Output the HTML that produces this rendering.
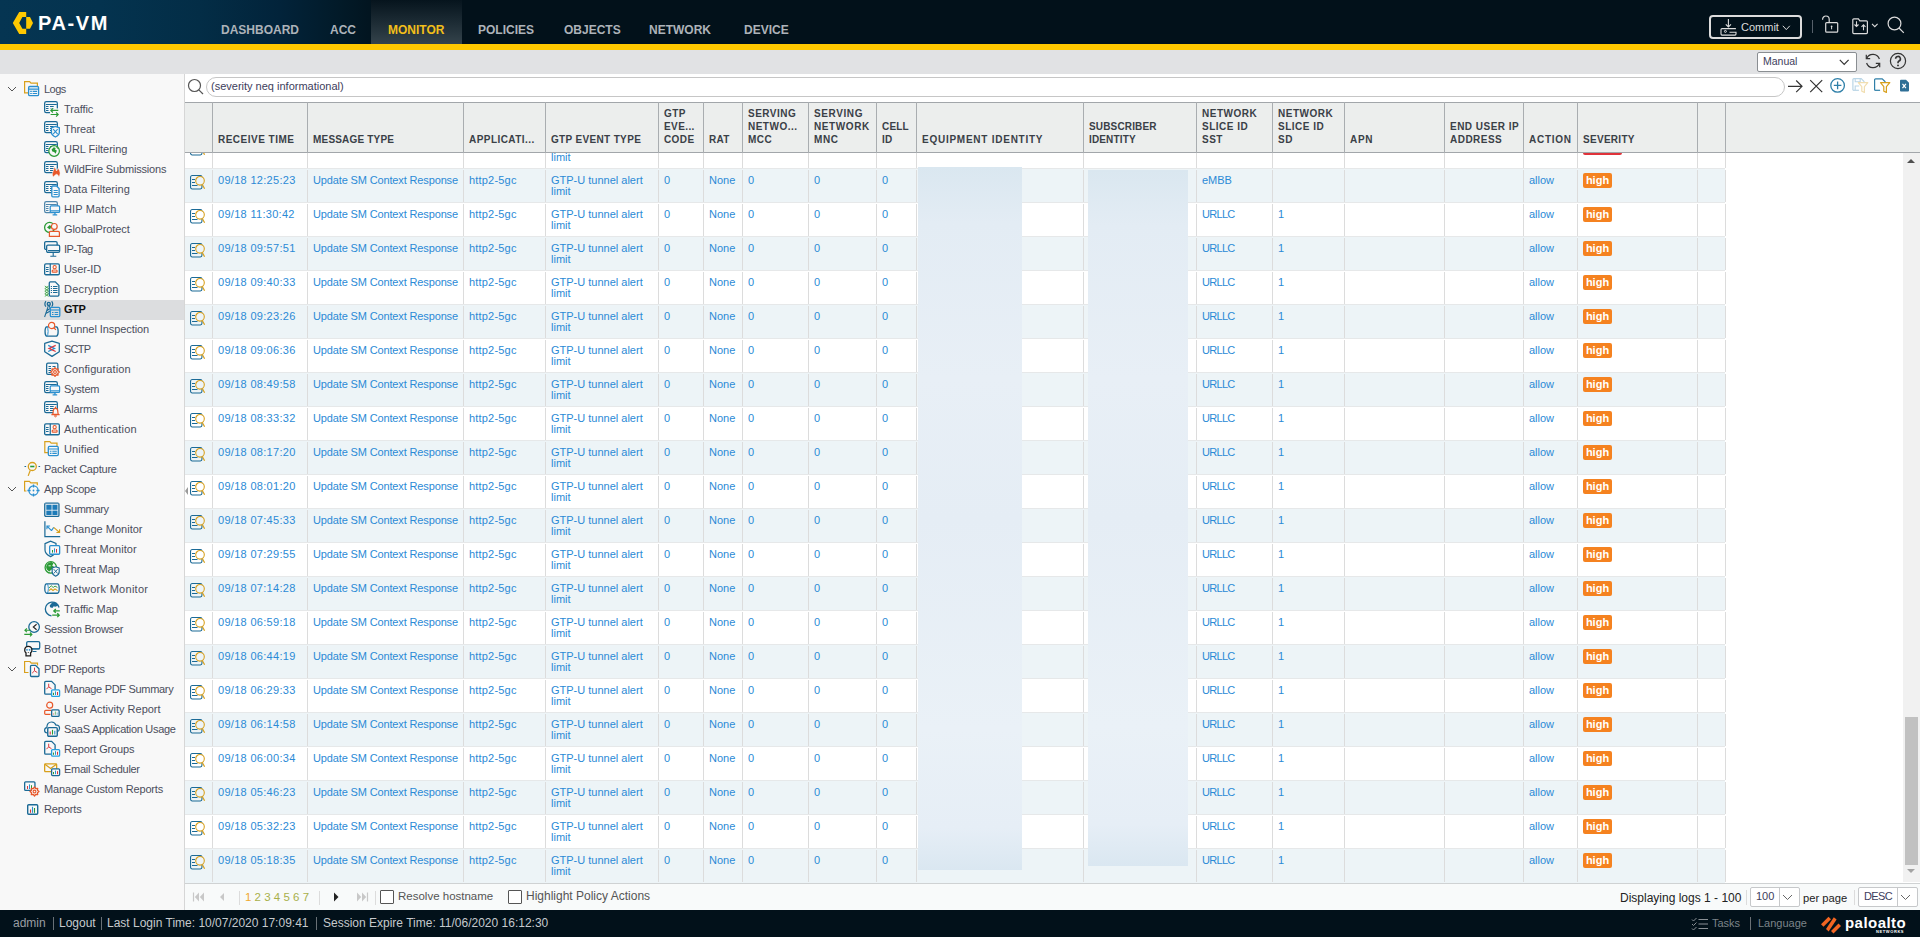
<!DOCTYPE html><html><head><meta charset="utf-8"><title>GTP Logs</title><style>
*{margin:0;padding:0;box-sizing:border-box}
html,body{width:1920px;height:937px;overflow:hidden;background:#fff;font-family:"Liberation Sans",sans-serif}
.a{position:absolute;white-space:nowrap}
svg.a{overflow:visible}
#hdr{left:0;top:0;width:1920px;height:44px;background:linear-gradient(90deg,#053552 0px,#04334f 100px,#032d46 200px,#02233a 280px,#021a28 340px,#02131d 380px,#02111a 460px,#02111a 1920px)}
#tab{left:371px;top:0;width:91px;height:44px;background:linear-gradient(180deg,#06141d 0%,#1c2b34 50%,#34434b 100%)}
#ybar{left:0;top:44px;width:1920px;height:6px;background:#ffc800}
#tbar{left:0;top:50px;width:1920px;height:24px;background:#e1e2e4}
#side{left:0;top:74px;width:185px;height:836px;background:#f8f8f8;border-right:1px solid #d6d6d6}
#main{left:185px;top:74px;width:1735px;height:836px;background:#fff}
#foot{left:0;top:910px;width:1920px;height:27px;background:#02111a}
.nav{top:24px;font-size:12px;font-weight:bold;color:#adb3b9;line-height:12px}
.hd{font-size:10px;font-weight:bold;color:#3a4047;line-height:13px}
.c{font-size:11px;color:#2b8ad6;line-height:11px}
.si{font-size:11px;color:#4b4e5c;line-height:12px;letter-spacing:-0.15px}
.badge{width:29px;height:15px;background:#f58220;border-radius:2px;color:#fff;font-size:11px;font-weight:bold;line-height:15px;text-align:center}
.ft{top:917px;font-size:12px;line-height:13px;color:#c6cacd}
.pg{font-size:12px;line-height:13px;color:#222}
</style></head><body>
<div id="hdr" class="a"></div><div id="tab" class="a"></div>
<div id="ybar" class="a"></div><div id="tbar" class="a"></div>
<div id="side" class="a"></div><div id="main" class="a"></div><div id="foot" class="a"></div>
<svg class="a" style="left:0;top:0" width="40" height="44"><polygon fill="#ffc800" points="19.2,12 26.2,12 26.2,17 22.4,17 19.2,23 22.4,28.8 26.2,28.8 26.2,34 19.2,34 12.8,23"/><polygon fill="#ffc800" points="26.2,17 30,17 33,23 30,28.8 26.2,28.8"/></svg>
<div class="a" style="left:38px;top:14px;font-size:20px;font-weight:bold;color:#fff;letter-spacing:1.6px;line-height:18px">PA-VM</div>
<div class="a nav" style="left:221px;color:#adb3b9">DASHBOARD</div>
<div class="a nav" style="left:330px;color:#adb3b9">ACC</div>
<div class="a nav" style="left:388px;color:#f2bf1a">MONITOR</div>
<div class="a nav" style="left:478px;color:#adb3b9">POLICIES</div>
<div class="a nav" style="left:564px;color:#adb3b9">OBJECTS</div>
<div class="a nav" style="left:649px;color:#adb3b9">NETWORK</div>
<div class="a nav" style="left:744px;color:#adb3b9">DEVICE</div>
<div class="a" style="left:1709px;top:15px;width:93px;height:24px;border:2px solid #dcdcdc;border-radius:4px"></div>
<svg class="a" style="left:1720px;top:18px" width="18" height="18"><path d="M8.4 1v7.8M5.8 6.3l2.6 2.6 2.6-2.6" fill="none" stroke="#dcdcdc" stroke-width="1.1"/><path d="M15.9 10.6H2a1 1 0 0 0-1 1v4.5a1 1 0 0 0 1 1h13a1 1 0 0 0 1-1v-1.8H9.5" fill="none" stroke="#dcdcdc" stroke-width="1.1"/><circle cx="5.4" cy="13.4" r="1" fill="none" stroke="#dcdcdc" stroke-width="1"/></svg>
<div class="a" style="left:1741px;top:21px;font-size:11px;line-height:12px;color:#dcdcdc">Commit</div>
<svg class="a" style="left:1782px;top:25px" width="9" height="6"><polyline points="0.8,0.8 4.3,4.6 7.8,0.8" fill="none" stroke="#dcdcdc" stroke-width="1"/></svg>
<div class="a" style="left:1812px;top:20px;width:1px;height:13px;background:#56606a"></div>
<svg class="a" style="left:1820px;top:15px" width="20" height="20"><path d="M2.6 4.7V4.3a3.3 3.3 0 0 1 6.6 0v3.3" fill="none" stroke="#dcdcdc" stroke-width="1.2"/><rect x="5.7" y="7.6" width="12" height="9.6" rx="1" fill="none" stroke="#dcdcdc" stroke-width="1.2"/><circle cx="11.6" cy="11.3" r="0.9" fill="#dcdcdc"/><path d="M11.6 11.5v2.8" stroke="#dcdcdc" stroke-width="1"/></svg>
<svg class="a" style="left:1851px;top:17px" width="30" height="18"><path d="M1.8 15.6V2.8a1 1 0 0 1 1-1h4.6l1.5 2h6.5a1 1 0 0 1 1 1v10.8a1 1 0 0 1-1 1H2.8a1 1 0 0 1-1-1z" fill="none" stroke="#dcdcdc" stroke-width="1.2"/><path d="M5.5 4.2v5.3M3.5 7.5l2 2 2-2M12.5 13.2V7.8M10.5 9.8l2-2 2 2" fill="none" stroke="#dcdcdc" stroke-width="1.1"/><polyline points="21,6.8 23.8,9.6 26.6,6.8" fill="none" stroke="#dcdcdc" stroke-width="1.1"/></svg>
<svg class="a" style="left:1886px;top:15px" width="20" height="20"><circle cx="8.5" cy="8.5" r="6.4" fill="none" stroke="#dcdcdc" stroke-width="1.2"/><path d="M13 13l4.8 4.8" stroke="#dcdcdc" stroke-width="1.2"/></svg>
<div class="a" style="left:1757px;top:52px;width:100px;height:20px;border:1px solid #8a8e92;border-radius:2px;background:#fff"></div>
<div class="a" style="left:1763px;top:56px;font-size:10.5px;line-height:11px;color:#3d3d5c">Manual</div>
<svg class="a" style="left:1839px;top:59px" width="11" height="7"><polyline points="0.8,0.8 5.2,5.4 9.6,0.8" fill="none" stroke="#333" stroke-width="1.2"/></svg>
<svg class="a" style="left:1864px;top:52px" width="18" height="18"><path d="M2.7 6.4A6.8 6.8 0 0 1 15.4 7" fill="none" stroke="#333" stroke-width="1.2"/><path d="M2.3 2.8v3.9h3.9" fill="none" stroke="#333" stroke-width="1.2"/><path d="M15.3 11.6A6.8 6.8 0 0 1 2.6 11" fill="none" stroke="#333" stroke-width="1.2"/><path d="M15.7 15.2v-3.9h-3.9" fill="none" stroke="#333" stroke-width="1.2"/></svg>
<svg class="a" style="left:1889px;top:52px" width="18" height="18"><circle cx="9" cy="9" r="7.6" fill="none" stroke="#333" stroke-width="1.2"/><path d="M6.6 6.8a2.4 2.4 0 1 1 3.4 2.2c-0.7 0.4-1 0.9-1 1.7v0.6" fill="none" stroke="#333" stroke-width="1.6"/><circle cx="9" cy="13.4" r="0.95" fill="#333"/></svg>
<svg class="a" style="left:187px;top:78px" width="18" height="18"><circle cx="7.5" cy="7.5" r="6" fill="none" stroke="#555" stroke-width="1.2"/><line x1="11.8" y1="11.8" x2="16" y2="16" stroke="#555" stroke-width="1.2"/></svg>
<div class="a" style="left:206px;top:77px;width:1579px;height:20px;border:1px solid #c6c6c6;border-radius:10px;background:#fff"></div>
<div class="a" style="left:211px;top:80px;font-size:11px;line-height:12px;color:#3d3d5c">(severity neq informational)</div>
<svg class="a" style="left:1787px;top:79px" width="17" height="15"><path d="M1 7.3h14.2M9.2 1.5l5.8 5.8-5.8 5.8" fill="none" stroke="#333" stroke-width="1.2"/></svg>
<svg class="a" style="left:1809px;top:79px" width="15" height="15"><path d="M1.2 1.2l12 12M13.2 1.2l-12 12" fill="none" stroke="#333" stroke-width="1.2"/></svg>
<svg class="a" style="left:1829px;top:77px" width="17" height="17"><circle cx="8.6" cy="8.4" r="6.8" fill="none" stroke="#2e7fa8" stroke-width="1.3"/><path d="M8.6 4.6v7.6M4.8 8.4h7.6" stroke="#2e7fa8" stroke-width="1.3"/></svg>
<svg class="a" style="left:1851px;top:77px" width="18" height="18"><path d="M1.9 13.3V2.6a1 1 0 0 1 1-1h7.3l2.8 2.8v3" fill="none" stroke="#b9d5e6" stroke-width="1.2"/><path d="M1.9 13.3h6" stroke="#b9d5e6" stroke-width="1.2"/><path d="M4.2 1.8v3h5v-3M4.2 13v-4h4" fill="none" stroke="#b9d5e6" stroke-width="1.1"/><path d="M7.3 5.6h9.5l-3.4 4v5.8l-2.6-1.2V9.6z" fill="#fff" stroke="#f1deb0" stroke-width="1.2" stroke-linejoin="round"/></svg>
<svg class="a" style="left:1873px;top:77px" width="18" height="18"><path d="M1.6 13.3V2.8a1 1 0 0 1 1-1h6.6l2.8 2.8v1.5" fill="none" stroke="#2e7fa8" stroke-width="1.2"/><path d="M1.6 13.3h5.5" stroke="#2e7fa8" stroke-width="1.2"/><path d="M7.5 5.6h9.3l-3.4 4v5.8l-2.6-1.2V9.6z" fill="#fff" stroke="#d8a01c" stroke-width="1.2" stroke-linejoin="round"/></svg>
<svg class="a" style="left:1899px;top:79px" width="12" height="14"><path d="M1 1.8a1 1 0 0 1 1-1h5l3 3v7.8a1 1 0 0 1-1 1H2a1 1 0 0 1-1-1z" fill="#2e6f96"/><path d="M3.5 4.8l3.4 4.4M6.9 4.8l-3.4 4.4" stroke="#fff" stroke-width="1.2"/></svg>
<div class="a" style="left:185px;top:102px;width:1735px;height:51px;background:#eceeed;border-top:1px solid #a2a6aa;border-bottom:1px solid #a2a6aa"></div>
<div class="a" style="left:185px;top:153px;width:1540px;height:15px;background:#fff;"></div>
<div class="a" style="left:185px;top:168px;width:1540px;height:34px;background:#edf4f7;border-top:1px solid #e6e8e9;"></div>
<div class="a" style="left:185px;top:202px;width:1540px;height:34px;background:#fff;border-top:1px solid #e6e8e9;"></div>
<div class="a" style="left:185px;top:236px;width:1540px;height:34px;background:#edf4f7;border-top:1px solid #e6e8e9;"></div>
<div class="a" style="left:185px;top:270px;width:1540px;height:34px;background:#fff;border-top:1px solid #e6e8e9;"></div>
<div class="a" style="left:185px;top:304px;width:1540px;height:34px;background:#edf4f7;border-top:1px solid #e6e8e9;"></div>
<div class="a" style="left:185px;top:338px;width:1540px;height:34px;background:#fff;border-top:1px solid #e6e8e9;"></div>
<div class="a" style="left:185px;top:372px;width:1540px;height:34px;background:#edf4f7;border-top:1px solid #e6e8e9;"></div>
<div class="a" style="left:185px;top:406px;width:1540px;height:34px;background:#fff;border-top:1px solid #e6e8e9;"></div>
<div class="a" style="left:185px;top:440px;width:1540px;height:34px;background:#edf4f7;border-top:1px solid #e6e8e9;"></div>
<div class="a" style="left:185px;top:474px;width:1540px;height:34px;background:#fff;border-top:1px solid #e6e8e9;"></div>
<div class="a" style="left:185px;top:508px;width:1540px;height:34px;background:#edf4f7;border-top:1px solid #e6e8e9;"></div>
<div class="a" style="left:185px;top:542px;width:1540px;height:34px;background:#fff;border-top:1px solid #e6e8e9;"></div>
<div class="a" style="left:185px;top:576px;width:1540px;height:34px;background:#edf4f7;border-top:1px solid #e6e8e9;"></div>
<div class="a" style="left:185px;top:610px;width:1540px;height:34px;background:#fff;border-top:1px solid #e6e8e9;"></div>
<div class="a" style="left:185px;top:644px;width:1540px;height:34px;background:#edf4f7;border-top:1px solid #e6e8e9;"></div>
<div class="a" style="left:185px;top:678px;width:1540px;height:34px;background:#fff;border-top:1px solid #e6e8e9;"></div>
<div class="a" style="left:185px;top:712px;width:1540px;height:34px;background:#edf4f7;border-top:1px solid #e6e8e9;"></div>
<div class="a" style="left:185px;top:746px;width:1540px;height:34px;background:#fff;border-top:1px solid #e6e8e9;"></div>
<div class="a" style="left:185px;top:780px;width:1540px;height:34px;background:#edf4f7;border-top:1px solid #e6e8e9;"></div>
<div class="a" style="left:185px;top:814px;width:1540px;height:34px;background:#fff;border-top:1px solid #e6e8e9;"></div>
<div class="a" style="left:185px;top:848px;width:1540px;height:35px;background:#edf4f7;border-top:1px solid #e6e8e9;"></div>
<div class="a" style="left:212px;top:102px;width:1px;height:51px;background:#a9adb0"></div>
<div class="a" style="left:212px;top:153px;width:1px;height:15px;background:#dcdcdc"></div>
<div class="a" style="left:212px;top:168px;width:1px;height:715px;background:repeating-linear-gradient(180deg,transparent 0 2px,#dcdcdc 2px 34px)"></div>
<div class="a" style="left:307px;top:102px;width:1px;height:51px;background:#a9adb0"></div>
<div class="a" style="left:307px;top:153px;width:1px;height:15px;background:#dcdcdc"></div>
<div class="a" style="left:307px;top:168px;width:1px;height:715px;background:repeating-linear-gradient(180deg,transparent 0 2px,#dcdcdc 2px 34px)"></div>
<div class="a" style="left:463px;top:102px;width:1px;height:51px;background:#a9adb0"></div>
<div class="a" style="left:463px;top:153px;width:1px;height:15px;background:#dcdcdc"></div>
<div class="a" style="left:463px;top:168px;width:1px;height:715px;background:repeating-linear-gradient(180deg,transparent 0 2px,#dcdcdc 2px 34px)"></div>
<div class="a" style="left:545px;top:102px;width:1px;height:51px;background:#a9adb0"></div>
<div class="a" style="left:545px;top:153px;width:1px;height:15px;background:#dcdcdc"></div>
<div class="a" style="left:545px;top:168px;width:1px;height:715px;background:repeating-linear-gradient(180deg,transparent 0 2px,#dcdcdc 2px 34px)"></div>
<div class="a" style="left:658px;top:102px;width:1px;height:51px;background:#a9adb0"></div>
<div class="a" style="left:658px;top:153px;width:1px;height:15px;background:#dcdcdc"></div>
<div class="a" style="left:658px;top:168px;width:1px;height:715px;background:repeating-linear-gradient(180deg,transparent 0 2px,#dcdcdc 2px 34px)"></div>
<div class="a" style="left:703px;top:102px;width:1px;height:51px;background:#a9adb0"></div>
<div class="a" style="left:703px;top:153px;width:1px;height:15px;background:#dcdcdc"></div>
<div class="a" style="left:703px;top:168px;width:1px;height:715px;background:repeating-linear-gradient(180deg,transparent 0 2px,#dcdcdc 2px 34px)"></div>
<div class="a" style="left:742px;top:102px;width:1px;height:51px;background:#a9adb0"></div>
<div class="a" style="left:742px;top:153px;width:1px;height:15px;background:#dcdcdc"></div>
<div class="a" style="left:742px;top:168px;width:1px;height:715px;background:repeating-linear-gradient(180deg,transparent 0 2px,#dcdcdc 2px 34px)"></div>
<div class="a" style="left:808px;top:102px;width:1px;height:51px;background:#a9adb0"></div>
<div class="a" style="left:808px;top:153px;width:1px;height:15px;background:#dcdcdc"></div>
<div class="a" style="left:808px;top:168px;width:1px;height:715px;background:repeating-linear-gradient(180deg,transparent 0 2px,#dcdcdc 2px 34px)"></div>
<div class="a" style="left:876px;top:102px;width:1px;height:51px;background:#a9adb0"></div>
<div class="a" style="left:876px;top:153px;width:1px;height:15px;background:#dcdcdc"></div>
<div class="a" style="left:876px;top:168px;width:1px;height:715px;background:repeating-linear-gradient(180deg,transparent 0 2px,#dcdcdc 2px 34px)"></div>
<div class="a" style="left:916px;top:102px;width:1px;height:51px;background:#a9adb0"></div>
<div class="a" style="left:916px;top:153px;width:1px;height:15px;background:#dcdcdc"></div>
<div class="a" style="left:916px;top:168px;width:1px;height:715px;background:repeating-linear-gradient(180deg,transparent 0 2px,#dcdcdc 2px 34px)"></div>
<div class="a" style="left:1083px;top:102px;width:1px;height:51px;background:#a9adb0"></div>
<div class="a" style="left:1083px;top:153px;width:1px;height:15px;background:#dcdcdc"></div>
<div class="a" style="left:1083px;top:168px;width:1px;height:715px;background:repeating-linear-gradient(180deg,transparent 0 2px,#dcdcdc 2px 34px)"></div>
<div class="a" style="left:1196px;top:102px;width:1px;height:51px;background:#a9adb0"></div>
<div class="a" style="left:1196px;top:153px;width:1px;height:15px;background:#dcdcdc"></div>
<div class="a" style="left:1196px;top:168px;width:1px;height:715px;background:repeating-linear-gradient(180deg,transparent 0 2px,#dcdcdc 2px 34px)"></div>
<div class="a" style="left:1272px;top:102px;width:1px;height:51px;background:#a9adb0"></div>
<div class="a" style="left:1272px;top:153px;width:1px;height:15px;background:#dcdcdc"></div>
<div class="a" style="left:1272px;top:168px;width:1px;height:715px;background:repeating-linear-gradient(180deg,transparent 0 2px,#dcdcdc 2px 34px)"></div>
<div class="a" style="left:1344px;top:102px;width:1px;height:51px;background:#a9adb0"></div>
<div class="a" style="left:1344px;top:153px;width:1px;height:15px;background:#dcdcdc"></div>
<div class="a" style="left:1344px;top:168px;width:1px;height:715px;background:repeating-linear-gradient(180deg,transparent 0 2px,#dcdcdc 2px 34px)"></div>
<div class="a" style="left:1444px;top:102px;width:1px;height:51px;background:#a9adb0"></div>
<div class="a" style="left:1444px;top:153px;width:1px;height:15px;background:#dcdcdc"></div>
<div class="a" style="left:1444px;top:168px;width:1px;height:715px;background:repeating-linear-gradient(180deg,transparent 0 2px,#dcdcdc 2px 34px)"></div>
<div class="a" style="left:1523px;top:102px;width:1px;height:51px;background:#a9adb0"></div>
<div class="a" style="left:1523px;top:153px;width:1px;height:15px;background:#dcdcdc"></div>
<div class="a" style="left:1523px;top:168px;width:1px;height:715px;background:repeating-linear-gradient(180deg,transparent 0 2px,#dcdcdc 2px 34px)"></div>
<div class="a" style="left:1577px;top:102px;width:1px;height:51px;background:#a9adb0"></div>
<div class="a" style="left:1577px;top:153px;width:1px;height:15px;background:#dcdcdc"></div>
<div class="a" style="left:1577px;top:168px;width:1px;height:715px;background:repeating-linear-gradient(180deg,transparent 0 2px,#dcdcdc 2px 34px)"></div>
<div class="a" style="left:1697px;top:102px;width:1px;height:51px;background:#a9adb0"></div>
<div class="a" style="left:1697px;top:153px;width:1px;height:15px;background:#dcdcdc"></div>
<div class="a" style="left:1697px;top:168px;width:1px;height:715px;background:repeating-linear-gradient(180deg,transparent 0 2px,#dcdcdc 2px 34px)"></div>
<div class="a" style="left:1725px;top:102px;width:1px;height:51px;background:#a9adb0"></div>
<div class="a" style="left:1725px;top:153px;width:1px;height:15px;background:#dcdcdc"></div>
<div class="a" style="left:1725px;top:168px;width:1px;height:715px;background:repeating-linear-gradient(180deg,transparent 0 2px,#dcdcdc 2px 34px)"></div>
<div class="a" style="left:185px;top:883px;width:1735px;height:27px;background:#f8fafa;border-top:1px solid #cfd2d3"></div>
<div class="a hd" style="left:218px;top:133px;letter-spacing:0.49px">RECEIVE TIME</div>
<div class="a hd" style="left:313px;top:133px;letter-spacing:0.19px">MESSAGE TYPE</div>
<div class="a hd" style="left:469px;top:133px;letter-spacing:0.44px">APPLICATI...</div>
<div class="a hd" style="left:551px;top:133px;letter-spacing:0.34px">GTP EVENT TYPE</div>
<div class="a hd" style="left:664px;top:107px;letter-spacing:0.4px">GTP<br>EVE...<br>CODE</div>
<div class="a hd" style="left:709px;top:133px;letter-spacing:0.3px">RAT</div>
<div class="a hd" style="left:748px;top:107px;letter-spacing:0.49px">SERVING<br>NETWO...<br>MCC</div>
<div class="a hd" style="left:814px;top:107px;letter-spacing:0.6px">SERVING<br>NETWORK<br>MNC</div>
<div class="a hd" style="left:882px;top:120px;letter-spacing:0.2px">CELL<br>ID</div>
<div class="a hd" style="left:922px;top:133px;letter-spacing:0.75px">EQUIPMENT IDENTITY</div>
<div class="a hd" style="left:1089px;top:120px;letter-spacing:0.15px">SUBSCRIBER<br>IDENTITY</div>
<div class="a hd" style="left:1202px;top:107px;letter-spacing:0.5px">NETWORK<br>SLICE ID<br>SST</div>
<div class="a hd" style="left:1278px;top:107px;letter-spacing:0.5px">NETWORK<br>SLICE ID<br>SD</div>
<div class="a hd" style="left:1350px;top:133px;letter-spacing:0.69px">APN</div>
<div class="a hd" style="left:1450px;top:120px;letter-spacing:0.48px">END USER IP<br>ADDRESS</div>
<div class="a hd" style="left:1529px;top:133px;letter-spacing:0.73px">ACTION</div>
<div class="a hd" style="left:1583px;top:133px;letter-spacing:0.29px">SEVERITY</div>
<svg class="a" style="left:190px;top:175px" width="16" height="16"><rect x="0.55" y="0.55" width="11.4" height="13.4" rx="1.6" fill="none" stroke="#1b6a96" stroke-width="1.1"/><path d="M2 4.5h3M2 7.5h3M2 10.5h5.5" stroke="#1b6a96" stroke-width="1.1"/><circle cx="10" cy="5.8" r="4.3" fill="#edf4f7" stroke="#d8a01c" stroke-width="1.1"/><path d="M12.4 9.8l2.2 4" stroke="#d8a01c" stroke-width="1.2"/></svg>
<div class="a c" style="left:218px;top:175px;letter-spacing:0.3px">09/18 12:25:23</div>
<div class="a c" style="left:313px;top:175px;letter-spacing:-0.14px">Update SM Context Response</div>
<div class="a c" style="left:469px;top:175px;letter-spacing:0.19px">http2-5gc</div>
<div class="a c" style="left:551px;top:175px">GTP-U tunnel alert<br>limit</div>
<div class="a c" style="left:664px;top:175px">0</div>
<div class="a c" style="left:709px;top:175px">None</div>
<div class="a c" style="left:748px;top:175px">0</div>
<div class="a c" style="left:814px;top:175px">0</div>
<div class="a c" style="left:882px;top:175px">0</div>
<div class="a c" style="left:1202px;top:175px;letter-spacing:0px">eMBB</div>
<div class="a c" style="left:1529px;top:175px">allow</div>
<div class="a badge" style="left:1583px;top:173px">high</div>
<svg class="a" style="left:190px;top:209px" width="16" height="16"><rect x="0.55" y="0.55" width="11.4" height="13.4" rx="1.6" fill="none" stroke="#1b6a96" stroke-width="1.1"/><path d="M2 4.5h3M2 7.5h3M2 10.5h5.5" stroke="#1b6a96" stroke-width="1.1"/><circle cx="10" cy="5.8" r="4.3" fill="#fff" stroke="#d8a01c" stroke-width="1.1"/><path d="M12.4 9.8l2.2 4" stroke="#d8a01c" stroke-width="1.2"/></svg>
<div class="a c" style="left:218px;top:209px;letter-spacing:0.3px">09/18 11:30:42</div>
<div class="a c" style="left:313px;top:209px;letter-spacing:-0.14px">Update SM Context Response</div>
<div class="a c" style="left:469px;top:209px;letter-spacing:0.19px">http2-5gc</div>
<div class="a c" style="left:551px;top:209px">GTP-U tunnel alert<br>limit</div>
<div class="a c" style="left:664px;top:209px">0</div>
<div class="a c" style="left:709px;top:209px">None</div>
<div class="a c" style="left:748px;top:209px">0</div>
<div class="a c" style="left:814px;top:209px">0</div>
<div class="a c" style="left:882px;top:209px">0</div>
<div class="a c" style="left:1202px;top:209px;letter-spacing:-0.7px">URLLC</div>
<div class="a c" style="left:1278px;top:209px">1</div>
<div class="a c" style="left:1529px;top:209px">allow</div>
<div class="a badge" style="left:1583px;top:207px">high</div>
<svg class="a" style="left:190px;top:243px" width="16" height="16"><rect x="0.55" y="0.55" width="11.4" height="13.4" rx="1.6" fill="none" stroke="#1b6a96" stroke-width="1.1"/><path d="M2 4.5h3M2 7.5h3M2 10.5h5.5" stroke="#1b6a96" stroke-width="1.1"/><circle cx="10" cy="5.8" r="4.3" fill="#edf4f7" stroke="#d8a01c" stroke-width="1.1"/><path d="M12.4 9.8l2.2 4" stroke="#d8a01c" stroke-width="1.2"/></svg>
<div class="a c" style="left:218px;top:243px;letter-spacing:0.3px">09/18 09:57:51</div>
<div class="a c" style="left:313px;top:243px;letter-spacing:-0.14px">Update SM Context Response</div>
<div class="a c" style="left:469px;top:243px;letter-spacing:0.19px">http2-5gc</div>
<div class="a c" style="left:551px;top:243px">GTP-U tunnel alert<br>limit</div>
<div class="a c" style="left:664px;top:243px">0</div>
<div class="a c" style="left:709px;top:243px">None</div>
<div class="a c" style="left:748px;top:243px">0</div>
<div class="a c" style="left:814px;top:243px">0</div>
<div class="a c" style="left:882px;top:243px">0</div>
<div class="a c" style="left:1202px;top:243px;letter-spacing:-0.7px">URLLC</div>
<div class="a c" style="left:1278px;top:243px">1</div>
<div class="a c" style="left:1529px;top:243px">allow</div>
<div class="a badge" style="left:1583px;top:241px">high</div>
<svg class="a" style="left:190px;top:277px" width="16" height="16"><rect x="0.55" y="0.55" width="11.4" height="13.4" rx="1.6" fill="none" stroke="#1b6a96" stroke-width="1.1"/><path d="M2 4.5h3M2 7.5h3M2 10.5h5.5" stroke="#1b6a96" stroke-width="1.1"/><circle cx="10" cy="5.8" r="4.3" fill="#fff" stroke="#d8a01c" stroke-width="1.1"/><path d="M12.4 9.8l2.2 4" stroke="#d8a01c" stroke-width="1.2"/></svg>
<div class="a c" style="left:218px;top:277px;letter-spacing:0.3px">09/18 09:40:33</div>
<div class="a c" style="left:313px;top:277px;letter-spacing:-0.14px">Update SM Context Response</div>
<div class="a c" style="left:469px;top:277px;letter-spacing:0.19px">http2-5gc</div>
<div class="a c" style="left:551px;top:277px">GTP-U tunnel alert<br>limit</div>
<div class="a c" style="left:664px;top:277px">0</div>
<div class="a c" style="left:709px;top:277px">None</div>
<div class="a c" style="left:748px;top:277px">0</div>
<div class="a c" style="left:814px;top:277px">0</div>
<div class="a c" style="left:882px;top:277px">0</div>
<div class="a c" style="left:1202px;top:277px;letter-spacing:-0.7px">URLLC</div>
<div class="a c" style="left:1278px;top:277px">1</div>
<div class="a c" style="left:1529px;top:277px">allow</div>
<div class="a badge" style="left:1583px;top:275px">high</div>
<svg class="a" style="left:190px;top:311px" width="16" height="16"><rect x="0.55" y="0.55" width="11.4" height="13.4" rx="1.6" fill="none" stroke="#1b6a96" stroke-width="1.1"/><path d="M2 4.5h3M2 7.5h3M2 10.5h5.5" stroke="#1b6a96" stroke-width="1.1"/><circle cx="10" cy="5.8" r="4.3" fill="#edf4f7" stroke="#d8a01c" stroke-width="1.1"/><path d="M12.4 9.8l2.2 4" stroke="#d8a01c" stroke-width="1.2"/></svg>
<div class="a c" style="left:218px;top:311px;letter-spacing:0.3px">09/18 09:23:26</div>
<div class="a c" style="left:313px;top:311px;letter-spacing:-0.14px">Update SM Context Response</div>
<div class="a c" style="left:469px;top:311px;letter-spacing:0.19px">http2-5gc</div>
<div class="a c" style="left:551px;top:311px">GTP-U tunnel alert<br>limit</div>
<div class="a c" style="left:664px;top:311px">0</div>
<div class="a c" style="left:709px;top:311px">None</div>
<div class="a c" style="left:748px;top:311px">0</div>
<div class="a c" style="left:814px;top:311px">0</div>
<div class="a c" style="left:882px;top:311px">0</div>
<div class="a c" style="left:1202px;top:311px;letter-spacing:-0.7px">URLLC</div>
<div class="a c" style="left:1278px;top:311px">1</div>
<div class="a c" style="left:1529px;top:311px">allow</div>
<div class="a badge" style="left:1583px;top:309px">high</div>
<svg class="a" style="left:190px;top:345px" width="16" height="16"><rect x="0.55" y="0.55" width="11.4" height="13.4" rx="1.6" fill="none" stroke="#1b6a96" stroke-width="1.1"/><path d="M2 4.5h3M2 7.5h3M2 10.5h5.5" stroke="#1b6a96" stroke-width="1.1"/><circle cx="10" cy="5.8" r="4.3" fill="#fff" stroke="#d8a01c" stroke-width="1.1"/><path d="M12.4 9.8l2.2 4" stroke="#d8a01c" stroke-width="1.2"/></svg>
<div class="a c" style="left:218px;top:345px;letter-spacing:0.3px">09/18 09:06:36</div>
<div class="a c" style="left:313px;top:345px;letter-spacing:-0.14px">Update SM Context Response</div>
<div class="a c" style="left:469px;top:345px;letter-spacing:0.19px">http2-5gc</div>
<div class="a c" style="left:551px;top:345px">GTP-U tunnel alert<br>limit</div>
<div class="a c" style="left:664px;top:345px">0</div>
<div class="a c" style="left:709px;top:345px">None</div>
<div class="a c" style="left:748px;top:345px">0</div>
<div class="a c" style="left:814px;top:345px">0</div>
<div class="a c" style="left:882px;top:345px">0</div>
<div class="a c" style="left:1202px;top:345px;letter-spacing:-0.7px">URLLC</div>
<div class="a c" style="left:1278px;top:345px">1</div>
<div class="a c" style="left:1529px;top:345px">allow</div>
<div class="a badge" style="left:1583px;top:343px">high</div>
<svg class="a" style="left:190px;top:379px" width="16" height="16"><rect x="0.55" y="0.55" width="11.4" height="13.4" rx="1.6" fill="none" stroke="#1b6a96" stroke-width="1.1"/><path d="M2 4.5h3M2 7.5h3M2 10.5h5.5" stroke="#1b6a96" stroke-width="1.1"/><circle cx="10" cy="5.8" r="4.3" fill="#edf4f7" stroke="#d8a01c" stroke-width="1.1"/><path d="M12.4 9.8l2.2 4" stroke="#d8a01c" stroke-width="1.2"/></svg>
<div class="a c" style="left:218px;top:379px;letter-spacing:0.3px">09/18 08:49:58</div>
<div class="a c" style="left:313px;top:379px;letter-spacing:-0.14px">Update SM Context Response</div>
<div class="a c" style="left:469px;top:379px;letter-spacing:0.19px">http2-5gc</div>
<div class="a c" style="left:551px;top:379px">GTP-U tunnel alert<br>limit</div>
<div class="a c" style="left:664px;top:379px">0</div>
<div class="a c" style="left:709px;top:379px">None</div>
<div class="a c" style="left:748px;top:379px">0</div>
<div class="a c" style="left:814px;top:379px">0</div>
<div class="a c" style="left:882px;top:379px">0</div>
<div class="a c" style="left:1202px;top:379px;letter-spacing:-0.7px">URLLC</div>
<div class="a c" style="left:1278px;top:379px">1</div>
<div class="a c" style="left:1529px;top:379px">allow</div>
<div class="a badge" style="left:1583px;top:377px">high</div>
<svg class="a" style="left:190px;top:413px" width="16" height="16"><rect x="0.55" y="0.55" width="11.4" height="13.4" rx="1.6" fill="none" stroke="#1b6a96" stroke-width="1.1"/><path d="M2 4.5h3M2 7.5h3M2 10.5h5.5" stroke="#1b6a96" stroke-width="1.1"/><circle cx="10" cy="5.8" r="4.3" fill="#fff" stroke="#d8a01c" stroke-width="1.1"/><path d="M12.4 9.8l2.2 4" stroke="#d8a01c" stroke-width="1.2"/></svg>
<div class="a c" style="left:218px;top:413px;letter-spacing:0.3px">09/18 08:33:32</div>
<div class="a c" style="left:313px;top:413px;letter-spacing:-0.14px">Update SM Context Response</div>
<div class="a c" style="left:469px;top:413px;letter-spacing:0.19px">http2-5gc</div>
<div class="a c" style="left:551px;top:413px">GTP-U tunnel alert<br>limit</div>
<div class="a c" style="left:664px;top:413px">0</div>
<div class="a c" style="left:709px;top:413px">None</div>
<div class="a c" style="left:748px;top:413px">0</div>
<div class="a c" style="left:814px;top:413px">0</div>
<div class="a c" style="left:882px;top:413px">0</div>
<div class="a c" style="left:1202px;top:413px;letter-spacing:-0.7px">URLLC</div>
<div class="a c" style="left:1278px;top:413px">1</div>
<div class="a c" style="left:1529px;top:413px">allow</div>
<div class="a badge" style="left:1583px;top:411px">high</div>
<svg class="a" style="left:190px;top:447px" width="16" height="16"><rect x="0.55" y="0.55" width="11.4" height="13.4" rx="1.6" fill="none" stroke="#1b6a96" stroke-width="1.1"/><path d="M2 4.5h3M2 7.5h3M2 10.5h5.5" stroke="#1b6a96" stroke-width="1.1"/><circle cx="10" cy="5.8" r="4.3" fill="#edf4f7" stroke="#d8a01c" stroke-width="1.1"/><path d="M12.4 9.8l2.2 4" stroke="#d8a01c" stroke-width="1.2"/></svg>
<div class="a c" style="left:218px;top:447px;letter-spacing:0.3px">09/18 08:17:20</div>
<div class="a c" style="left:313px;top:447px;letter-spacing:-0.14px">Update SM Context Response</div>
<div class="a c" style="left:469px;top:447px;letter-spacing:0.19px">http2-5gc</div>
<div class="a c" style="left:551px;top:447px">GTP-U tunnel alert<br>limit</div>
<div class="a c" style="left:664px;top:447px">0</div>
<div class="a c" style="left:709px;top:447px">None</div>
<div class="a c" style="left:748px;top:447px">0</div>
<div class="a c" style="left:814px;top:447px">0</div>
<div class="a c" style="left:882px;top:447px">0</div>
<div class="a c" style="left:1202px;top:447px;letter-spacing:-0.7px">URLLC</div>
<div class="a c" style="left:1278px;top:447px">1</div>
<div class="a c" style="left:1529px;top:447px">allow</div>
<div class="a badge" style="left:1583px;top:445px">high</div>
<svg class="a" style="left:190px;top:481px" width="16" height="16"><rect x="0.55" y="0.55" width="11.4" height="13.4" rx="1.6" fill="none" stroke="#1b6a96" stroke-width="1.1"/><path d="M2 4.5h3M2 7.5h3M2 10.5h5.5" stroke="#1b6a96" stroke-width="1.1"/><circle cx="10" cy="5.8" r="4.3" fill="#fff" stroke="#d8a01c" stroke-width="1.1"/><path d="M12.4 9.8l2.2 4" stroke="#d8a01c" stroke-width="1.2"/></svg>
<div class="a c" style="left:218px;top:481px;letter-spacing:0.3px">09/18 08:01:20</div>
<div class="a c" style="left:313px;top:481px;letter-spacing:-0.14px">Update SM Context Response</div>
<div class="a c" style="left:469px;top:481px;letter-spacing:0.19px">http2-5gc</div>
<div class="a c" style="left:551px;top:481px">GTP-U tunnel alert<br>limit</div>
<div class="a c" style="left:664px;top:481px">0</div>
<div class="a c" style="left:709px;top:481px">None</div>
<div class="a c" style="left:748px;top:481px">0</div>
<div class="a c" style="left:814px;top:481px">0</div>
<div class="a c" style="left:882px;top:481px">0</div>
<div class="a c" style="left:1202px;top:481px;letter-spacing:-0.7px">URLLC</div>
<div class="a c" style="left:1278px;top:481px">1</div>
<div class="a c" style="left:1529px;top:481px">allow</div>
<div class="a badge" style="left:1583px;top:479px">high</div>
<svg class="a" style="left:190px;top:515px" width="16" height="16"><rect x="0.55" y="0.55" width="11.4" height="13.4" rx="1.6" fill="none" stroke="#1b6a96" stroke-width="1.1"/><path d="M2 4.5h3M2 7.5h3M2 10.5h5.5" stroke="#1b6a96" stroke-width="1.1"/><circle cx="10" cy="5.8" r="4.3" fill="#edf4f7" stroke="#d8a01c" stroke-width="1.1"/><path d="M12.4 9.8l2.2 4" stroke="#d8a01c" stroke-width="1.2"/></svg>
<div class="a c" style="left:218px;top:515px;letter-spacing:0.3px">09/18 07:45:33</div>
<div class="a c" style="left:313px;top:515px;letter-spacing:-0.14px">Update SM Context Response</div>
<div class="a c" style="left:469px;top:515px;letter-spacing:0.19px">http2-5gc</div>
<div class="a c" style="left:551px;top:515px">GTP-U tunnel alert<br>limit</div>
<div class="a c" style="left:664px;top:515px">0</div>
<div class="a c" style="left:709px;top:515px">None</div>
<div class="a c" style="left:748px;top:515px">0</div>
<div class="a c" style="left:814px;top:515px">0</div>
<div class="a c" style="left:882px;top:515px">0</div>
<div class="a c" style="left:1202px;top:515px;letter-spacing:-0.7px">URLLC</div>
<div class="a c" style="left:1278px;top:515px">1</div>
<div class="a c" style="left:1529px;top:515px">allow</div>
<div class="a badge" style="left:1583px;top:513px">high</div>
<svg class="a" style="left:190px;top:549px" width="16" height="16"><rect x="0.55" y="0.55" width="11.4" height="13.4" rx="1.6" fill="none" stroke="#1b6a96" stroke-width="1.1"/><path d="M2 4.5h3M2 7.5h3M2 10.5h5.5" stroke="#1b6a96" stroke-width="1.1"/><circle cx="10" cy="5.8" r="4.3" fill="#fff" stroke="#d8a01c" stroke-width="1.1"/><path d="M12.4 9.8l2.2 4" stroke="#d8a01c" stroke-width="1.2"/></svg>
<div class="a c" style="left:218px;top:549px;letter-spacing:0.3px">09/18 07:29:55</div>
<div class="a c" style="left:313px;top:549px;letter-spacing:-0.14px">Update SM Context Response</div>
<div class="a c" style="left:469px;top:549px;letter-spacing:0.19px">http2-5gc</div>
<div class="a c" style="left:551px;top:549px">GTP-U tunnel alert<br>limit</div>
<div class="a c" style="left:664px;top:549px">0</div>
<div class="a c" style="left:709px;top:549px">None</div>
<div class="a c" style="left:748px;top:549px">0</div>
<div class="a c" style="left:814px;top:549px">0</div>
<div class="a c" style="left:882px;top:549px">0</div>
<div class="a c" style="left:1202px;top:549px;letter-spacing:-0.7px">URLLC</div>
<div class="a c" style="left:1278px;top:549px">1</div>
<div class="a c" style="left:1529px;top:549px">allow</div>
<div class="a badge" style="left:1583px;top:547px">high</div>
<svg class="a" style="left:190px;top:583px" width="16" height="16"><rect x="0.55" y="0.55" width="11.4" height="13.4" rx="1.6" fill="none" stroke="#1b6a96" stroke-width="1.1"/><path d="M2 4.5h3M2 7.5h3M2 10.5h5.5" stroke="#1b6a96" stroke-width="1.1"/><circle cx="10" cy="5.8" r="4.3" fill="#edf4f7" stroke="#d8a01c" stroke-width="1.1"/><path d="M12.4 9.8l2.2 4" stroke="#d8a01c" stroke-width="1.2"/></svg>
<div class="a c" style="left:218px;top:583px;letter-spacing:0.3px">09/18 07:14:28</div>
<div class="a c" style="left:313px;top:583px;letter-spacing:-0.14px">Update SM Context Response</div>
<div class="a c" style="left:469px;top:583px;letter-spacing:0.19px">http2-5gc</div>
<div class="a c" style="left:551px;top:583px">GTP-U tunnel alert<br>limit</div>
<div class="a c" style="left:664px;top:583px">0</div>
<div class="a c" style="left:709px;top:583px">None</div>
<div class="a c" style="left:748px;top:583px">0</div>
<div class="a c" style="left:814px;top:583px">0</div>
<div class="a c" style="left:882px;top:583px">0</div>
<div class="a c" style="left:1202px;top:583px;letter-spacing:-0.7px">URLLC</div>
<div class="a c" style="left:1278px;top:583px">1</div>
<div class="a c" style="left:1529px;top:583px">allow</div>
<div class="a badge" style="left:1583px;top:581px">high</div>
<svg class="a" style="left:190px;top:617px" width="16" height="16"><rect x="0.55" y="0.55" width="11.4" height="13.4" rx="1.6" fill="none" stroke="#1b6a96" stroke-width="1.1"/><path d="M2 4.5h3M2 7.5h3M2 10.5h5.5" stroke="#1b6a96" stroke-width="1.1"/><circle cx="10" cy="5.8" r="4.3" fill="#fff" stroke="#d8a01c" stroke-width="1.1"/><path d="M12.4 9.8l2.2 4" stroke="#d8a01c" stroke-width="1.2"/></svg>
<div class="a c" style="left:218px;top:617px;letter-spacing:0.3px">09/18 06:59:18</div>
<div class="a c" style="left:313px;top:617px;letter-spacing:-0.14px">Update SM Context Response</div>
<div class="a c" style="left:469px;top:617px;letter-spacing:0.19px">http2-5gc</div>
<div class="a c" style="left:551px;top:617px">GTP-U tunnel alert<br>limit</div>
<div class="a c" style="left:664px;top:617px">0</div>
<div class="a c" style="left:709px;top:617px">None</div>
<div class="a c" style="left:748px;top:617px">0</div>
<div class="a c" style="left:814px;top:617px">0</div>
<div class="a c" style="left:882px;top:617px">0</div>
<div class="a c" style="left:1202px;top:617px;letter-spacing:-0.7px">URLLC</div>
<div class="a c" style="left:1278px;top:617px">1</div>
<div class="a c" style="left:1529px;top:617px">allow</div>
<div class="a badge" style="left:1583px;top:615px">high</div>
<svg class="a" style="left:190px;top:651px" width="16" height="16"><rect x="0.55" y="0.55" width="11.4" height="13.4" rx="1.6" fill="none" stroke="#1b6a96" stroke-width="1.1"/><path d="M2 4.5h3M2 7.5h3M2 10.5h5.5" stroke="#1b6a96" stroke-width="1.1"/><circle cx="10" cy="5.8" r="4.3" fill="#edf4f7" stroke="#d8a01c" stroke-width="1.1"/><path d="M12.4 9.8l2.2 4" stroke="#d8a01c" stroke-width="1.2"/></svg>
<div class="a c" style="left:218px;top:651px;letter-spacing:0.3px">09/18 06:44:19</div>
<div class="a c" style="left:313px;top:651px;letter-spacing:-0.14px">Update SM Context Response</div>
<div class="a c" style="left:469px;top:651px;letter-spacing:0.19px">http2-5gc</div>
<div class="a c" style="left:551px;top:651px">GTP-U tunnel alert<br>limit</div>
<div class="a c" style="left:664px;top:651px">0</div>
<div class="a c" style="left:709px;top:651px">None</div>
<div class="a c" style="left:748px;top:651px">0</div>
<div class="a c" style="left:814px;top:651px">0</div>
<div class="a c" style="left:882px;top:651px">0</div>
<div class="a c" style="left:1202px;top:651px;letter-spacing:-0.7px">URLLC</div>
<div class="a c" style="left:1278px;top:651px">1</div>
<div class="a c" style="left:1529px;top:651px">allow</div>
<div class="a badge" style="left:1583px;top:649px">high</div>
<svg class="a" style="left:190px;top:685px" width="16" height="16"><rect x="0.55" y="0.55" width="11.4" height="13.4" rx="1.6" fill="none" stroke="#1b6a96" stroke-width="1.1"/><path d="M2 4.5h3M2 7.5h3M2 10.5h5.5" stroke="#1b6a96" stroke-width="1.1"/><circle cx="10" cy="5.8" r="4.3" fill="#fff" stroke="#d8a01c" stroke-width="1.1"/><path d="M12.4 9.8l2.2 4" stroke="#d8a01c" stroke-width="1.2"/></svg>
<div class="a c" style="left:218px;top:685px;letter-spacing:0.3px">09/18 06:29:33</div>
<div class="a c" style="left:313px;top:685px;letter-spacing:-0.14px">Update SM Context Response</div>
<div class="a c" style="left:469px;top:685px;letter-spacing:0.19px">http2-5gc</div>
<div class="a c" style="left:551px;top:685px">GTP-U tunnel alert<br>limit</div>
<div class="a c" style="left:664px;top:685px">0</div>
<div class="a c" style="left:709px;top:685px">None</div>
<div class="a c" style="left:748px;top:685px">0</div>
<div class="a c" style="left:814px;top:685px">0</div>
<div class="a c" style="left:882px;top:685px">0</div>
<div class="a c" style="left:1202px;top:685px;letter-spacing:-0.7px">URLLC</div>
<div class="a c" style="left:1278px;top:685px">1</div>
<div class="a c" style="left:1529px;top:685px">allow</div>
<div class="a badge" style="left:1583px;top:683px">high</div>
<svg class="a" style="left:190px;top:719px" width="16" height="16"><rect x="0.55" y="0.55" width="11.4" height="13.4" rx="1.6" fill="none" stroke="#1b6a96" stroke-width="1.1"/><path d="M2 4.5h3M2 7.5h3M2 10.5h5.5" stroke="#1b6a96" stroke-width="1.1"/><circle cx="10" cy="5.8" r="4.3" fill="#edf4f7" stroke="#d8a01c" stroke-width="1.1"/><path d="M12.4 9.8l2.2 4" stroke="#d8a01c" stroke-width="1.2"/></svg>
<div class="a c" style="left:218px;top:719px;letter-spacing:0.3px">09/18 06:14:58</div>
<div class="a c" style="left:313px;top:719px;letter-spacing:-0.14px">Update SM Context Response</div>
<div class="a c" style="left:469px;top:719px;letter-spacing:0.19px">http2-5gc</div>
<div class="a c" style="left:551px;top:719px">GTP-U tunnel alert<br>limit</div>
<div class="a c" style="left:664px;top:719px">0</div>
<div class="a c" style="left:709px;top:719px">None</div>
<div class="a c" style="left:748px;top:719px">0</div>
<div class="a c" style="left:814px;top:719px">0</div>
<div class="a c" style="left:882px;top:719px">0</div>
<div class="a c" style="left:1202px;top:719px;letter-spacing:-0.7px">URLLC</div>
<div class="a c" style="left:1278px;top:719px">1</div>
<div class="a c" style="left:1529px;top:719px">allow</div>
<div class="a badge" style="left:1583px;top:717px">high</div>
<svg class="a" style="left:190px;top:753px" width="16" height="16"><rect x="0.55" y="0.55" width="11.4" height="13.4" rx="1.6" fill="none" stroke="#1b6a96" stroke-width="1.1"/><path d="M2 4.5h3M2 7.5h3M2 10.5h5.5" stroke="#1b6a96" stroke-width="1.1"/><circle cx="10" cy="5.8" r="4.3" fill="#fff" stroke="#d8a01c" stroke-width="1.1"/><path d="M12.4 9.8l2.2 4" stroke="#d8a01c" stroke-width="1.2"/></svg>
<div class="a c" style="left:218px;top:753px;letter-spacing:0.3px">09/18 06:00:34</div>
<div class="a c" style="left:313px;top:753px;letter-spacing:-0.14px">Update SM Context Response</div>
<div class="a c" style="left:469px;top:753px;letter-spacing:0.19px">http2-5gc</div>
<div class="a c" style="left:551px;top:753px">GTP-U tunnel alert<br>limit</div>
<div class="a c" style="left:664px;top:753px">0</div>
<div class="a c" style="left:709px;top:753px">None</div>
<div class="a c" style="left:748px;top:753px">0</div>
<div class="a c" style="left:814px;top:753px">0</div>
<div class="a c" style="left:882px;top:753px">0</div>
<div class="a c" style="left:1202px;top:753px;letter-spacing:-0.7px">URLLC</div>
<div class="a c" style="left:1278px;top:753px">1</div>
<div class="a c" style="left:1529px;top:753px">allow</div>
<div class="a badge" style="left:1583px;top:751px">high</div>
<svg class="a" style="left:190px;top:787px" width="16" height="16"><rect x="0.55" y="0.55" width="11.4" height="13.4" rx="1.6" fill="none" stroke="#1b6a96" stroke-width="1.1"/><path d="M2 4.5h3M2 7.5h3M2 10.5h5.5" stroke="#1b6a96" stroke-width="1.1"/><circle cx="10" cy="5.8" r="4.3" fill="#edf4f7" stroke="#d8a01c" stroke-width="1.1"/><path d="M12.4 9.8l2.2 4" stroke="#d8a01c" stroke-width="1.2"/></svg>
<div class="a c" style="left:218px;top:787px;letter-spacing:0.3px">09/18 05:46:23</div>
<div class="a c" style="left:313px;top:787px;letter-spacing:-0.14px">Update SM Context Response</div>
<div class="a c" style="left:469px;top:787px;letter-spacing:0.19px">http2-5gc</div>
<div class="a c" style="left:551px;top:787px">GTP-U tunnel alert<br>limit</div>
<div class="a c" style="left:664px;top:787px">0</div>
<div class="a c" style="left:709px;top:787px">None</div>
<div class="a c" style="left:748px;top:787px">0</div>
<div class="a c" style="left:814px;top:787px">0</div>
<div class="a c" style="left:882px;top:787px">0</div>
<div class="a c" style="left:1202px;top:787px;letter-spacing:-0.7px">URLLC</div>
<div class="a c" style="left:1278px;top:787px">1</div>
<div class="a c" style="left:1529px;top:787px">allow</div>
<div class="a badge" style="left:1583px;top:785px">high</div>
<svg class="a" style="left:190px;top:821px" width="16" height="16"><rect x="0.55" y="0.55" width="11.4" height="13.4" rx="1.6" fill="none" stroke="#1b6a96" stroke-width="1.1"/><path d="M2 4.5h3M2 7.5h3M2 10.5h5.5" stroke="#1b6a96" stroke-width="1.1"/><circle cx="10" cy="5.8" r="4.3" fill="#fff" stroke="#d8a01c" stroke-width="1.1"/><path d="M12.4 9.8l2.2 4" stroke="#d8a01c" stroke-width="1.2"/></svg>
<div class="a c" style="left:218px;top:821px;letter-spacing:0.3px">09/18 05:32:23</div>
<div class="a c" style="left:313px;top:821px;letter-spacing:-0.14px">Update SM Context Response</div>
<div class="a c" style="left:469px;top:821px;letter-spacing:0.19px">http2-5gc</div>
<div class="a c" style="left:551px;top:821px">GTP-U tunnel alert<br>limit</div>
<div class="a c" style="left:664px;top:821px">0</div>
<div class="a c" style="left:709px;top:821px">None</div>
<div class="a c" style="left:748px;top:821px">0</div>
<div class="a c" style="left:814px;top:821px">0</div>
<div class="a c" style="left:882px;top:821px">0</div>
<div class="a c" style="left:1202px;top:821px;letter-spacing:-0.7px">URLLC</div>
<div class="a c" style="left:1278px;top:821px">1</div>
<div class="a c" style="left:1529px;top:821px">allow</div>
<div class="a badge" style="left:1583px;top:819px">high</div>
<svg class="a" style="left:190px;top:855px" width="16" height="16"><rect x="0.55" y="0.55" width="11.4" height="13.4" rx="1.6" fill="none" stroke="#1b6a96" stroke-width="1.1"/><path d="M2 4.5h3M2 7.5h3M2 10.5h5.5" stroke="#1b6a96" stroke-width="1.1"/><circle cx="10" cy="5.8" r="4.3" fill="#edf4f7" stroke="#d8a01c" stroke-width="1.1"/><path d="M12.4 9.8l2.2 4" stroke="#d8a01c" stroke-width="1.2"/></svg>
<div class="a c" style="left:218px;top:855px;letter-spacing:0.3px">09/18 05:18:35</div>
<div class="a c" style="left:313px;top:855px;letter-spacing:-0.14px">Update SM Context Response</div>
<div class="a c" style="left:469px;top:855px;letter-spacing:0.19px">http2-5gc</div>
<div class="a c" style="left:551px;top:855px">GTP-U tunnel alert<br>limit</div>
<div class="a c" style="left:664px;top:855px">0</div>
<div class="a c" style="left:709px;top:855px">None</div>
<div class="a c" style="left:748px;top:855px">0</div>
<div class="a c" style="left:814px;top:855px">0</div>
<div class="a c" style="left:882px;top:855px">0</div>
<div class="a c" style="left:1202px;top:855px;letter-spacing:-0.7px">URLLC</div>
<div class="a c" style="left:1278px;top:855px">1</div>
<div class="a c" style="left:1529px;top:855px">allow</div>
<div class="a badge" style="left:1583px;top:853px">high</div>
<div class="a c" style="left:551px;top:153px;height:14px;overflow:hidden"><div style="margin-top:-1px">limit</div></div>
<div class="a" style="left:1583px;top:153px;width:39px;height:2px;background:#e0323a;border-radius:0 0 2px 2px"></div>
<div class="a" style="left:185px;top:153px;width:27px;height:5px;overflow:hidden"><svg style="position:absolute;left:5px;top:-12px" width="16" height="16"><rect x="0.55" y="0.55" width="11.4" height="13.4" rx="1.6" fill="none" stroke="#1b6a96" stroke-width="1.1"/><path d="M2 4.5h3M2 7.5h3M2 10.5h5.5" stroke="#1b6a96" stroke-width="1.1"/><circle cx="10" cy="5.8" r="4.3" fill="#fff" stroke="#d8a01c" stroke-width="1.1"/><path d="M12.4 9.8l2.2 4" stroke="#d8a01c" stroke-width="1.2"/></svg></div>
<div class="a" style="left:918px;top:167px;width:104px;height:703px;background:linear-gradient(180deg,#dae7f0,#e3ecf4 8%,#e8eff6 30%,#e5edf5 50%,#eaf1f7 80%,#e6eef6 94%,#dae7f1)"></div>
<div class="a" style="left:1088px;top:170px;width:100px;height:696px;background:linear-gradient(180deg,#dae7f0,#e3ecf4 8%,#e8eff6 30%,#e5edf5 50%,#eaf1f7 80%,#e6eef6 94%,#dae7f1)"></div>
<div class="a" style="left:1903px;top:153px;width:17px;height:729px;background:#f1f1f1"></div>
<div class="a" style="left:1905px;top:717px;width:13px;height:148px;background:#c1c1c1"></div>
<svg class="a" style="left:1906px;top:158px" width="10" height="6"><polygon points="1,5 5,1 9,5" fill="#505050"/></svg>
<svg class="a" style="left:1906px;top:868px" width="10" height="6"><polygon points="1,1 5,5 9,1" fill="#a3a3a3"/></svg>
<div class="a" style="left:0;top:300px;width:184px;height:20px;background:#dcdddf"></div>
<div class="a si" style="left:44px;top:83px;letter-spacing:-0.52px">Logs</div>
<svg class="a" style="left:7px;top:86px" width="11" height="7"><polyline points="1,1 5,5 9,1" fill="none" stroke="#555" stroke-width="1"/></svg>
<svg class="a" style="left:24px;top:80px" width="16" height="18"><path d="M4.6 12.799999999999999H0.6V1.6h5l1.4 1.6h6.4v3" fill="none" stroke="#d8a01c" stroke-width="1.2"/><rect x="4.6" y="6.5" width="10" height="9.2" rx="1.3" fill="#f8f8f8" stroke="#2a8fcf" stroke-width="1.3"/><path d="M4.6 9.1h10M6.199999999999999 11.4h1.6M8.6 11.4h4.5M6.199999999999999 13.5h1.6M8.6 13.5h4.5" stroke="#2a8fcf" stroke-width="1.1"/></svg>
<div class="a si" style="left:64px;top:103px;letter-spacing:-0.1px">Traffic</div>
<svg class="a" style="left:44px;top:100px" width="16" height="18"><rect x="0.65" y="1.65" width="12.7" height="10.9" rx="1.6" fill="none" stroke="#1b6a96" stroke-width="1.25"/><path d="M1.85 4.5H12.75" stroke="#1b6a96" stroke-width="1"/><path d="M2.0 6.5h2.5M6.0 6.5h3.7M2.0 8.5h2.5M6.0 8.5h3.7M2.0 10.5h2.5M6.0 10.5h3.7" stroke="#1b6a96" stroke-width="1"/><rect x="6" y="8.4" width="10" height="9" fill="#f8f8f8"/><path d="M14.3 10.4H6.8M8.9 8.3L6.8 10.4L8.9 12.5" fill="none" stroke="#2a9a35" stroke-width="1.1"/><path d="M6.6 14.5h7.6M12.1 12.4l2.1 2.1-2.1 2.1" fill="none" stroke="#2a9a35" stroke-width="1.1"/></svg>
<div class="a si" style="left:64px;top:123px;letter-spacing:-0.15px">Threat</div>
<svg class="a" style="left:44px;top:120px" width="16" height="18"><rect x="0.65" y="1.65" width="12.7" height="10.9" rx="1.6" fill="none" stroke="#1b6a96" stroke-width="1.25"/><path d="M1.85 4.5H12.75" stroke="#1b6a96" stroke-width="1"/><path d="M2.0 6.5h2.5M6.0 6.5h3.7M2.0 8.5h2.5M6.0 8.5h3.7M2.0 10.5h2.5M6.0 10.5h3.7" stroke="#1b6a96" stroke-width="1"/><g transform="translate(6.8 5.9) scale(1.07)"><path d="M0.6 1.8L4.3 0.5L8 1.8V6C8 8.2 6.2 9.6 4.3 10.4C2.4 9.6 0.6 8.2 0.6 6Z" fill="#f8f8f8" stroke="#2a8fcf" stroke-width="1.2"/><path d="M2.2 3L6.4 7.6M6.4 3L2.2 7.6" stroke="#2a8fcf" stroke-width="1"/></g></svg>
<div class="a si" style="left:64px;top:143px;letter-spacing:-0.03px">URL Filtering</div>
<svg class="a" style="left:44px;top:140px" width="16" height="18"><rect x="0.65" y="1.65" width="12.7" height="10.9" rx="1.6" fill="none" stroke="#1b6a96" stroke-width="1.25"/><path d="M1.85 4.5H12.75" stroke="#1b6a96" stroke-width="1"/><path d="M2.0 6.5h2.5M6.0 6.5h3.7M2.0 8.5h2.5M6.0 8.5h3.7M2.0 10.5h2.5M6.0 10.5h3.7" stroke="#1b6a96" stroke-width="1"/><circle cx="10.1" cy="11" r="5.3" fill="#f8f8f8" stroke="#2a9a35" stroke-width="1.2"/><path d="M7.6 9.6l2.2-2.4l1.9 0.8l-0.7 1.4l1.8 1.1l-1.1 3.3l-1.6-1.9l-1.8-0.3z" fill="#2a9a35"/><path d="M12.6 7.3l1.4 1.5" stroke="#2a9a35" stroke-width="0.9"/></svg>
<div class="a si" style="left:64px;top:163px;letter-spacing:-0.17px">WildFire Submissions</div>
<svg class="a" style="left:44px;top:160px" width="16" height="18"><rect x="0.65" y="1.65" width="12.7" height="10.9" rx="1.6" fill="none" stroke="#1b6a96" stroke-width="1.25"/><path d="M1.85 4.5H12.75" stroke="#1b6a96" stroke-width="1"/><path d="M2.0 6.5h2.5M6.0 6.5h3.7M2.0 8.5h2.5M6.0 8.5h3.7M2.0 10.5h2.5M6.0 10.5h3.7" stroke="#1b6a96" stroke-width="1"/><path d="M9.5 16.9C8.5 16 8.2 14.8 8.4 13.5C8.7 11.6 9.8 10.4 10.4 7C11.6 8.2 12.3 9.6 12.4 11C13 10.5 13.6 9.6 14 8.2C15.5 9.6 16.2 11.8 16.1 13.5C16 15 15.5 16.1 14.7 16.9C14.6 15.6 13.9 14.8 12.5 14.3C11.3 14.8 10.4 15.6 9.5 16.9Z" fill="#e8582a" stroke="#f8f8f8" stroke-width="0.6"/></svg>
<div class="a si" style="left:64px;top:183px;letter-spacing:0.03px">Data Filtering</div>
<svg class="a" style="left:44px;top:180px" width="16" height="18"><rect x="0.65" y="1.65" width="12.7" height="10.9" rx="1.6" fill="none" stroke="#1b6a96" stroke-width="1.25"/><path d="M1.85 4.5H12.75" stroke="#1b6a96" stroke-width="1"/><path d="M2.0 6.5h2.5M6.0 6.5h3.7M2.0 8.5h2.5M6.0 8.5h3.7M2.0 10.5h2.5M6.0 10.5h3.7" stroke="#1b6a96" stroke-width="1"/><path d="M7.8 7a1 1 0 0 1 1-1h3.7l2.6 2.6v7.2a1 1 0 0 1-1 1h-5.3a1 1 0 0 1-1-1z" fill="#f8f8f8" stroke="#2a8fcf" stroke-width="1.3"/><path d="M9.6 10.5h4.2M9.6 12.5h4.2M9.6 14.5h4.2" stroke="#2a8fcf" stroke-width="1"/></svg>
<div class="a si" style="left:64px;top:203px;letter-spacing:0.14px">HIP Match</div>
<svg class="a" style="left:44px;top:200px" width="16" height="18"><rect x="0.65" y="1.65" width="12.7" height="10.9" rx="1.6" fill="none" stroke="#4f86ab" stroke-width="1.25"/><path d="M1.85 4.5H12.75" stroke="#4f86ab" stroke-width="1"/><path d="M2.0 6.5h2.5M6.0 6.5h3.7M2.0 8.5h2.5M6.0 8.5h3.7M2.0 10.5h2.5M6.0 10.5h3.7" stroke="#4f86ab" stroke-width="1"/><rect x="6.2" y="5.9" width="9.4" height="6.6" rx="1" fill="#f8f8f8" stroke="#2a8fcf" stroke-width="1.2"/><path d="M6.2 10.9h9.4M10.9 12.5v2.2M8.600000000000001 14.9h4.6" stroke="#2a8fcf" stroke-width="1.2"/></svg>
<div class="a si" style="left:64px;top:223px;letter-spacing:-0.07px">GlobalProtect</div>
<svg class="a" style="left:44px;top:220px" width="16" height="18"><circle cx="5.6" cy="7.4" r="5" fill="none" stroke="#2a9a35" stroke-width="1.3"/><path d="M3 7.6l2.8-2.6l1.6 1.6l-1.4 2.9z" fill="#2a9a35"/><circle cx="10.3" cy="6.4" r="2.9" fill="#f8f8f8" stroke="#e8582a" stroke-width="1.2"/><path d="M5.4 16.4v-3.8a1.2 1.2 0 0 1 1.2-1.2h7.6a1.2 1.2 0 0 1 1.2 1.2v3.8z" fill="#f8f8f8" stroke="#e8582a" stroke-width="1.2"/></svg>
<div class="a si" style="left:64px;top:243px;letter-spacing:-0.53px">IP-Tag</div>
<svg class="a" style="left:44px;top:240px" width="16" height="18"><rect x="0.65" y="1.65" width="12.5" height="7.8" rx="1.3" fill="none" stroke="#1b6a96" stroke-width="1.3"/><rect x="2.65" y="5.15" width="13" height="7.2" rx="1.3" fill="#f8f8f8" stroke="#1b6a96" stroke-width="1.3"/><path d="M4 10.6h11M9.2 12.5v3.3M6.3 16.3h6" stroke="#1b6a96" stroke-width="1.1"/></svg>
<div class="a si" style="left:64px;top:263px;letter-spacing:-0.13px">User-ID</div>
<svg class="a" style="left:44px;top:260px" width="16" height="18"><rect x="0.65" y="3.85" width="14.7" height="10.9" rx="1.3" fill="none" stroke="#1b6a96" stroke-width="1.3"/><path d="M6.25 3.85v10.9" stroke="#1b6a96" stroke-width="1.2"/><path d="M2 7.5h2.6M2 9.5h2.6M2 11.5h2.6" stroke="#1b6a96" stroke-width="1"/><circle cx="10.65" cy="7.15" r="1.6" fill="none" stroke="#e8582a" stroke-width="1.1"/><rect x="8.15" y="9.95" width="5" height="2.2" rx="1" fill="none" stroke="#e8582a" stroke-width="1.1"/></svg>
<div class="a si" style="left:64px;top:283px;letter-spacing:0.21px">Decryption</div>
<svg class="a" style="left:44px;top:280px" width="16" height="18"><path d="M5.3 2.9a1 1 0 0 1 1-1h5l3.6 3.6v9.6a1 1 0 0 1-1 1h-7.6a1 1 0 0 1-1-1z" fill="none" stroke="#1b6a96" stroke-width="1.3"/><path d="M6.8 6.5h1.2M9 6.5h4.5M6.8 8.5h1.2M9 8.5h4.5M6.8 10.5h1.2M9 10.5h4.5M6.8 12.5h1.2M9 12.5h4.5" stroke="#1b6a96" stroke-width="1"/><path d="M0.8 6L4.6 8.6L0.8 11.2L4.6 13.8L0.8 16.4M4.6 6L0.8 8.6L4.6 11.2L0.8 13.8L4.6 16.4" fill="none" stroke="#2a9a35" stroke-width="0.8"/></svg>
<div class="a si" style="left:64px;top:303px;font-weight:bold;color:#111;letter-spacing:-0.45px">GTP</div>
<svg class="a" style="left:44px;top:300px" width="16" height="18"><circle cx="4.8" cy="3.9" r="1.5" fill="none" stroke="#1b6a96" stroke-width="1.4"/><path d="M2 1.2a3.8 3.8 0 0 0 0 5.4M7.6 1.2a3.8 3.8 0 0 1 0 5.4" fill="none" stroke="#1b6a96" stroke-width="1.2"/><path d="M4.3 5.8L0.6 17M5.3 5.8L6.8 10M1.8 13.5L6.3 11M2.8 10.8L5.6 8.8" fill="none" stroke="#1b6a96" stroke-width="1.05"/><rect x="6.3" y="7.3" width="9.5" height="9.4" rx="1.2" fill="#dcdddf" stroke="#2a8fcf" stroke-width="1.3"/><path d="M6.5 10h9.2" stroke="#2a8fcf" stroke-width="1.1"/><path d="M8 12.5h1.5M10.6 12.5h3.6M8 14.5h1.5M10.6 14.5h3.6" stroke="#2a8fcf" stroke-width="1"/></svg>
<div class="a si" style="left:64px;top:323px;letter-spacing:-0.08px">Tunnel Inspection</div>
<svg class="a" style="left:44px;top:320px" width="16" height="18"><path d="M2.6 6.8h10a1.8 4.7 0 0 1 0 9.3h-10a1.8 4.7 0 0 1 0-9.3z" fill="none" stroke="#1b6a96" stroke-width="1.3"/><path d="M2.6 6.8a1.8 4.7 0 0 1 0 9.3" fill="none" stroke="#2a8fcf" stroke-width="1"/><circle cx="7.6" cy="5.5" r="3.1" fill="#f8f8f8" stroke="#e8582a" stroke-width="1.2"/><path d="M9.8 7.7l2 2.2" stroke="#e8582a" stroke-width="1.2"/></svg>
<div class="a si" style="left:64px;top:343px;letter-spacing:-0.75px">SCTP</div>
<svg class="a" style="left:44px;top:340px" width="16" height="18"><path d="M0.7 3.4L8 1.2L15.3 3.4V11.8L8 16.4L0.7 11.8Z" fill="none" stroke="#1b6a96" stroke-width="1.25" stroke-linejoin="round"/><path d="M4.2 5.4L10.6 8.4L4.2 11.5" fill="none" stroke="#2a8fcf" stroke-width="1.2"/><path d="M11.7 5.4L5 8.4L11.7 11.5" fill="none" stroke="#d9363e" stroke-width="1.2"/></svg>
<div class="a si" style="left:64px;top:363px;letter-spacing:0.09px">Configuration</div>
<svg class="a" style="left:44px;top:360px" width="16" height="18"><rect x="2.65" y="3.15" width="11.2" height="11.2" rx="1.3" fill="none" stroke="#1b6a96" stroke-width="1.25"/><path d="M4.5 6.5h2.5M8.5 6.5h3M4.5 8.5h2.5M4.5 10.5h2.5M4.5 12.5h2.5" stroke="#1b6a96" stroke-width="1"/><polygon points="15.30,12.00 13.77,13.15 14.04,15.04 12.15,14.77 11.00,16.30 9.85,14.77 7.96,15.04 8.23,13.15 6.70,12.00 8.23,10.85 7.96,8.96 9.85,9.23 11.00,7.70 12.15,9.23 14.04,8.96 13.77,10.85" fill="#f8f8f8" stroke="#e8582a" stroke-width="1.3" stroke-linejoin="round"/><circle cx="11" cy="12" r="1.4" fill="none" stroke="#e8582a" stroke-width="1.1"/></svg>
<div class="a si" style="left:64px;top:383px;letter-spacing:-0.25px">System</div>
<svg class="a" style="left:44px;top:380px" width="16" height="18"><rect x="0.65" y="1.65" width="12.7" height="10.9" rx="1.6" fill="none" stroke="#1b6a96" stroke-width="1.25"/><path d="M1.85 4.5H12.75" stroke="#1b6a96" stroke-width="1"/><path d="M2.0 6.5h2.5M6.0 6.5h3.7M2.0 8.5h2.5M6.0 8.5h3.7M2.0 10.5h2.5M6.0 10.5h3.7" stroke="#1b6a96" stroke-width="1"/><rect x="6.2" y="5.9" width="9.4" height="6.6" rx="1" fill="#f8f8f8" stroke="#2a8fcf" stroke-width="1.2"/><path d="M6.2 10.9h9.4M10.9 12.5v2.2M8.600000000000001 14.9h4.6" stroke="#2a8fcf" stroke-width="1.2"/></svg>
<div class="a si" style="left:64px;top:403px;letter-spacing:-0.13px">Alarms</div>
<svg class="a" style="left:44px;top:400px" width="16" height="18"><rect x="0.65" y="1.65" width="12.7" height="10.9" rx="1.6" fill="none" stroke="#1b6a96" stroke-width="1.25"/><path d="M1.85 4.5H12.75" stroke="#1b6a96" stroke-width="1"/><path d="M2.0 6.5h2.5M6.0 6.5h3.7M2.0 8.5h2.5M6.0 8.5h3.7M2.0 10.5h2.5M6.0 10.5h3.7" stroke="#1b6a96" stroke-width="1"/><path d="M7.4 14.6h8.2M8.6 14.4c0.5-0.8 0.6-1.6 0.6-3.2c0-1.7 1-2.8 2.3-2.8s2.3 1.1 2.3 2.8c0 1.6 0.1 2.4 0.6 3.2z" fill="#f8f8f8" stroke="#e8582a" stroke-width="1.2"/><path d="M11.5 6.6v1.6" stroke="#e8582a" stroke-width="1.2"/><circle cx="11.5" cy="16" r="0.9" fill="none" stroke="#e8582a" stroke-width="0.9"/></svg>
<div class="a si" style="left:64px;top:423px;letter-spacing:0.23px">Authentication</div>
<svg class="a" style="left:44px;top:420px" width="16" height="18"><rect x="0.65" y="3.85" width="14.7" height="10.9" rx="1.3" fill="none" stroke="#1b6a96" stroke-width="1.3"/><path d="M6.25 3.85v10.9" stroke="#1b6a96" stroke-width="1.2"/><path d="M2 7.5h2.6M2 9.5h2.6M2 11.5h2.6" stroke="#1b6a96" stroke-width="1"/><circle cx="10.65" cy="7.15" r="1.6" fill="none" stroke="#e8582a" stroke-width="1.1"/><rect x="8.15" y="9.95" width="5" height="2.2" rx="1" fill="none" stroke="#e8582a" stroke-width="1.1"/></svg>
<div class="a si" style="left:64px;top:443px;letter-spacing:0.1px">Unified</div>
<svg class="a" style="left:44px;top:440px" width="16" height="18"><path d="M4.8 12.6H0.8V1.6h5l1.4 1.6h5.799999999999999v3" fill="none" stroke="#d8a01c" stroke-width="1.2"/><rect x="4.3" y="6.4" width="10" height="9.2" rx="1.3" fill="#f8f8f8" stroke="#2a8fcf" stroke-width="1.3"/><path d="M4.3 9.0h10M5.9 11.3h1.6M8.3 11.3h4.5M5.9 13.4h1.6M8.3 13.4h4.5" stroke="#2a8fcf" stroke-width="1.1"/></svg>
<div class="a si" style="left:44px;top:463px;letter-spacing:-0.22px">Packet Capture</div>
<svg class="a" style="left:24px;top:460px" width="16" height="18"><circle cx="8.3" cy="6.5" r="4" fill="none" stroke="#d8a01c" stroke-width="1.3"/><path d="M6.2 6.5h4.2" stroke="#2a9a35" stroke-width="1.6"/><path d="M6.3 10.2L4.2 15.9" stroke="#d8a01c" stroke-width="1.2"/><path d="M0.5 6.5h1.6M14.5 6.5h1.6" stroke="#1b6a96" stroke-width="1.1"/></svg>
<div class="a si" style="left:44px;top:483px;letter-spacing:-0.21px">App Scope</div>
<svg class="a" style="left:7px;top:486px" width="11" height="7"><polyline points="1,1 5,5 9,1" fill="none" stroke="#555" stroke-width="1"/></svg>
<svg class="a" style="left:24px;top:480px" width="16" height="18"><path d="M2.5 11H0.6V1.4h4.8l1.4 1.5h6.5v2.4" fill="none" stroke="#d8a01c" stroke-width="1.2"/><circle cx="9.5" cy="10.5" r="4.6" fill="#f8f8f8" stroke="#2a8fcf" stroke-width="1.2"/><path d="M9.5 4.4v3.2M9.5 13.4v3.2M3.4 10.5h3.2M12.4 10.5h3.2" stroke="#2a8fcf" stroke-width="1.3"/><circle cx="9.5" cy="10.5" r="0.9" fill="#2a8fcf"/></svg>
<div class="a si" style="left:64px;top:503px;letter-spacing:-0.35px">Summary</div>
<svg class="a" style="left:44px;top:500px" width="16" height="18"><rect x="0.75" y="3.05" width="14.2" height="13.3" rx="1.2" fill="none" stroke="#1b6a96" stroke-width="1.3"/><path d="M1 3.6h13.8" stroke="#5b94b8" stroke-width="1"/><rect x="2.3" y="4.8" width="5.3" height="5" fill="#1d7bb8"/><rect x="8.4" y="4.8" width="5.1" height="5" fill="#1d7bb8"/><rect x="2.3" y="10.6" width="5.3" height="4.4" fill="#1d7bb8"/><rect x="8.4" y="10.6" width="5.1" height="4.4" fill="#1d7bb8"/></svg>
<div class="a si" style="left:64px;top:523px;letter-spacing:0.02px">Change Monitor</div>
<svg class="a" style="left:44px;top:520px" width="16" height="18"><path d="M0.9 1.3v15.3h15.3" fill="none" stroke="#1b6a96" stroke-width="1.2"/><path d="M7.5 10.6L2.9 6M2.9 9.2V6h3.2M7.5 10.6l2.2-3.2" fill="none" stroke="#2a8fcf" stroke-width="1.1"/><path d="M9.7 7.4l5.9 5.1M15.6 9.3v3.2h-3.2" fill="none" stroke="#d8a01c" stroke-width="1.1"/></svg>
<div class="a si" style="left:64px;top:543px;letter-spacing:0.09px">Threat Monitor</div>
<svg class="a" style="left:44px;top:540px" width="16" height="18"><path d="M1 3.6L6.6 1.2L12 3.4V10C12 13 9.5 15.2 6.6 16.6C3.6 15.2 1 13 1 10Z" fill="none" stroke="#1b6a96" stroke-width="1.2"/><rect x="5.65" y="5.65" width="10" height="8.6" rx="1" fill="#f8f8f8" stroke="#2a8fcf" stroke-width="1.3"/><path d="M8.5 12.6v-2.6" stroke="#2a9a35" stroke-width="1"/><path d="M10.5 12.6v-4.2" stroke="#2a8fcf" stroke-width="1"/><path d="M12.5 12.6v-3.6" stroke="#d9363e" stroke-width="1"/></svg>
<div class="a si" style="left:64px;top:563px;letter-spacing:-0.06px">Threat Map</div>
<svg class="a" style="left:44px;top:560px" width="16" height="18"><circle cx="6.8" cy="7.4" r="5.7" fill="#f8f8f8" stroke="#2a9a35" stroke-width="1.3"/><path d="M2.4 5.8C3.2 3.5 5.4 2.1 7.8 2.1L9.5 3.6L8.2 5.6L10.6 7.2L9.6 10.2L7.2 9.4L5.6 11.6C3.6 10.8 2.2 9 2.1 7z" fill="#2a9a35"/><path d="M4.5 5.8h2.2" stroke="#f8f8f8" stroke-width="0.9"/><g transform="translate(7.6 6.3) scale(0.95)"><path d="M0.6 1.8L4.3 0.5L8 1.8V6C8 8.2 6.2 9.6 4.3 10.4C2.4 9.6 0.6 8.2 0.6 6Z" fill="#f8f8f8" stroke="#1b6a96" stroke-width="1.2"/><path d="M2.2 3L6.4 7.6M6.4 3L2.2 7.6" stroke="#1b6a96" stroke-width="1"/></g></svg>
<div class="a si" style="left:64px;top:583px;letter-spacing:0.28px">Network Monitor</div>
<svg class="a" style="left:44px;top:580px" width="16" height="18"><path d="M2.6 3.85h10.8a1.8 4.7 0 0 1 0 9.4H2.6a1.8 4.7 0 0 1 0-9.4z" fill="none" stroke="#1b6a96" stroke-width="1.3"/><path d="M2.6 3.85a1.8 4.7 0 0 1 0 9.4" fill="none" stroke="#2a8fcf" stroke-width="0.9"/><path d="M5 8l2.2-2.3l2 1.8l1.8-1.4l2.4 1.3" fill="none" stroke="#2a9a35" stroke-width="0.9"/><path d="M5 10.6l2-1.8l2 1.7l2-1.5l2.6 1.6" fill="none" stroke="#d8a01c" stroke-width="1.1"/></svg>
<div class="a si" style="left:64px;top:603px;letter-spacing:-0.06px">Traffic Map</div>
<svg class="a" style="left:44px;top:600px" width="16" height="18"><path d="M15 7.5A6.9 6.9 0 1 0 7.5 15.8" fill="none" stroke="#1b6a96" stroke-width="1.3"/><path d="M5.7 5.5l2.5-3l4 0.3l1.8 3l-2.8 1l-1.5-0.6l-1.3 1.8l-2.3-0.8z" fill="#1b6a96"/><path d="M15.8 10.9H9.8M11.8 9L9.8 10.9L11.8 12.8" fill="none" stroke="#2a9a35" stroke-width="1.3"/><path d="M8.2 15.2h7M13.3 13.3l1.9 1.9-1.9 1.9" fill="none" stroke="#2a9a35" stroke-width="1.3"/></svg>
<div class="a si" style="left:44px;top:623px;letter-spacing:-0.22px">Session Browser</div>
<svg class="a" style="left:24px;top:620px" width="16" height="18"><circle cx="10.1" cy="7" r="5.3" fill="none" stroke="#1b6a96" stroke-width="1.3"/><path d="M12.6 4.3L9.3 7L12.6 9.7" fill="none" stroke="#222" stroke-width="1.1"/><path d="M6.6 10.3H0.9M2.9 8.4L0.9 10.3L2.9 12.2" fill="none" stroke="#2a9a35" stroke-width="1.1"/><path d="M0.3 14.4h7.6M6 12.5l1.9 1.9-1.9 1.9" fill="none" stroke="#2a9a35" stroke-width="1.1"/></svg>
<div class="a si" style="left:44px;top:643px;letter-spacing:0.21px">Botnet</div>
<svg class="a" style="left:24px;top:640px" width="16" height="18"><rect x="2.7" y="1.6" width="13" height="7.2" rx="1.3" fill="none" stroke="#1b6a96" stroke-width="1.3"/><path d="M6 8.8h9.7M8.5 11.5h4" stroke="#1b6a96" stroke-width="1.2"/><path d="M0.7 10.3c0-2.6 1.5-4 3.6-4s3.6 1.4 3.6 4c0 1.5-0.7 2.2-1.3 2.6v2.9H2v-2.9C1.4 12.5 0.7 11.8 0.7 10.3z" fill="#f8f8f8" stroke="#1d1d1d" stroke-width="1.3"/><circle cx="3" cy="9.8" r="0.9" fill="#2a8fcf"/><circle cx="5.6" cy="9.8" r="0.9" fill="#2a8fcf"/><path d="M4.3 12.2v0.8" stroke="#1d1d1d" stroke-width="1"/></svg>
<div class="a si" style="left:44px;top:663px;letter-spacing:-0.26px">PDF Reports</div>
<svg class="a" style="left:7px;top:666px" width="11" height="7"><polyline points="1,1 5,5 9,1" fill="none" stroke="#555" stroke-width="1"/></svg>
<svg class="a" style="left:24px;top:660px" width="16" height="18"><path d="M4.5 12.5H0.6V1.5h5.3l1.4 1.6h6.2v2.5" fill="none" stroke="#d8a01c" stroke-width="1.2"/><path d="M6.5 6.3a1 1 0 0 1 1-1h4.0l3.5 3.5v6.699999999999999a1 1 0 0 1-1 1H7.5a1 1 0 0 1-1-1z" fill="#f8f8f8" stroke="#1b6a96" stroke-width="1.3"/><path d="M10.5 7.6v3.2M10.5 10.8l-2.3 2.3M10.5 10.8l2.8 1.8" fill="none" stroke="#d9363e" stroke-width="1"/></svg>
<div class="a si" style="left:64px;top:683px;letter-spacing:-0.31px">Manage PDF Summary</div>
<svg class="a" style="left:44px;top:680px" width="16" height="18"><path d="M0.7 2.4a1 1 0 0 1 1-1h5.9l3.5 3.5v8.3a1 1 0 0 1-1 1H1.7a1 1 0 0 1-1-1z" fill="#f8f8f8" stroke="#1b6a96" stroke-width="1.3"/><path d="M4.7 3.6999999999999997v3.2M4.7 6.9l-2.3 2.3M4.7 6.9l2.8 1.8" fill="none" stroke="#d9363e" stroke-width="1"/><rect x="7.6" y="9.8" width="8" height="6.6" rx="1" fill="#f8f8f8" stroke="#25a0e0" stroke-width="1.3"/><path d="M9.5 14.999999999999998v-2.2" stroke="#2a9a35" stroke-width="1"/><path d="M11.5 14.999999999999998v-3.6" stroke="#2a8fcf" stroke-width="1"/><path d="M13.5 14.999999999999998v-3" stroke="#d9363e" stroke-width="1"/></svg>
<div class="a si" style="left:64px;top:703px;letter-spacing:0.0px">User Activity Report</div>
<svg class="a" style="left:44px;top:700px" width="16" height="18"><circle cx="5.7" cy="5.2" r="3" fill="none" stroke="#e8582a" stroke-width="1.2"/><path d="M6.5 14.4H1.6a0.9 0.9 0 0 1-0.9-0.9v-2.2a0.9 0.9 0 0 1 0.9-0.9h6" fill="none" stroke="#e8582a" stroke-width="1.2"/><rect x="7.65" y="9.95" width="7.5" height="6.5" rx="1" fill="#f8f8f8" stroke="#1b6a96" stroke-width="1.3"/><path d="M9.6 14.8v-1.5" stroke="#e89a8a" stroke-width="1.1"/><path d="M11.4 14.8v-3.2" stroke="#7fc08a" stroke-width="1.1"/><path d="M13.2 14.8v-2.4" stroke="#8fc0e0" stroke-width="1.1"/></svg>
<div class="a si" style="left:64px;top:723px;letter-spacing:-0.29px">SaaS Application Usage</div>
<svg class="a" style="left:44px;top:720px" width="16" height="18"><path d="M3.3 13C1.5 13 0.6 11.7 0.6 10.3C0.6 8.9 1.6 7.9 2.8 7.7C2.9 4.4 4.8 2 7.6 2C9.7 2 11.3 3.3 11.9 5.1C12.3 5 12.6 5 13 5C14.7 5.3 15.7 6.9 15.5 8.7C15.3 10.4 14.3 11.5 13 11.8" fill="none" stroke="#1b6a96" stroke-width="1.2"/><rect x="3.75" y="7.65" width="9.5" height="8.6" rx="1" fill="#f8f8f8" stroke="#1b6a96" stroke-width="1.4"/><path d="M6.2 14.6v-3" stroke="#d9363e" stroke-width="1.1"/><path d="M8.5 14.6v-4.8" stroke="#2a9a35" stroke-width="1.1"/><path d="M10.8 14.6v-3.8" stroke="#2a8fcf" stroke-width="1.1"/></svg>
<div class="a si" style="left:64px;top:743px;letter-spacing:-0.13px">Report Groups</div>
<svg class="a" style="left:44px;top:740px" width="16" height="18"><path d="M0.7 2.4a1 1 0 0 1 1-1h5.9l3.5 3.5v8.3a1 1 0 0 1-1 1H1.7a1 1 0 0 1-1-1z" fill="#f8f8f8" stroke="#1b6a96" stroke-width="1.3"/><path d="M4.7 3.6999999999999997v3.2M4.7 6.9l-2.3 2.3M4.7 6.9l2.8 1.8" fill="none" stroke="#d9363e" stroke-width="1"/><rect x="7.6" y="9.6" width="8" height="6.6" rx="1" fill="#f8f8f8" stroke="#25a0e0" stroke-width="1.3"/><path d="M9.5 14.799999999999999v-2.2" stroke="#2a9a35" stroke-width="1"/><path d="M11.5 14.799999999999999v-3.6" stroke="#2a8fcf" stroke-width="1"/><path d="M13.5 14.799999999999999v-3" stroke="#d9363e" stroke-width="1"/></svg>
<div class="a si" style="left:64px;top:763px;letter-spacing:-0.29px">Email Scheduler</div>
<svg class="a" style="left:44px;top:760px" width="16" height="18"><rect x="0.65" y="3.85" width="12" height="7.8" rx="0.8" fill="none" stroke="#d8a01c" stroke-width="1.3"/><path d="M0.9 4.2L6.65 8.6L12.4 4.2" fill="none" stroke="#d8a01c" stroke-width="1.2"/><rect x="7.6" y="8.8" width="8" height="6.8" rx="1" fill="#f8f8f8" stroke="#1b6a96" stroke-width="1.3"/><path d="M9.5 14.200000000000001v-2.2" stroke="#2a9a35" stroke-width="1"/><path d="M11.5 14.200000000000001v-3.6" stroke="#2a8fcf" stroke-width="1"/><path d="M13.5 14.200000000000001v-3" stroke="#d9363e" stroke-width="1"/></svg>
<div class="a si" style="left:44px;top:783px;letter-spacing:-0.15px">Manage Custom Reports</div>
<svg class="a" style="left:24px;top:780px" width="16" height="18"><rect x="0.65" y="1.85" width="10.3" height="8.6" rx="1" fill="none" stroke="#1b6a96" stroke-width="1.3"/><path d="M3.5 9v-3" stroke="#d9363e" stroke-width="1"/><path d="M5.5 9v-4.6" stroke="#2a8fcf" stroke-width="1"/><path d="M7.5 9v-3.8" stroke="#2a9a35" stroke-width="1"/><polygon points="15.00,11.50 13.46,12.72 13.68,14.68 11.72,14.46 10.50,16.00 9.28,14.46 7.32,14.68 7.54,12.72 6.00,11.50 7.54,10.28 7.32,8.32 9.28,8.54 10.50,7.00 11.72,8.54 13.68,8.32 13.46,10.28" fill="#f8f8f8" stroke="#e8582a" stroke-width="1.3" stroke-linejoin="round"/><circle cx="10.5" cy="11.5" r="1.4" fill="none" stroke="#e8582a" stroke-width="1.1"/></svg>
<div class="a si" style="left:44px;top:803px;letter-spacing:-0.13px">Reports</div>
<svg class="a" style="left:24px;top:800px" width="16" height="18"><rect x="3.7" y="4.7" width="10" height="9.6" rx="1" fill="none" stroke="#1b6a96" stroke-width="1.4"/><path d="M6.5 12.8v-3.3" stroke="#d9363e" stroke-width="1.1"/><path d="M8.5 12.8v-6" stroke="#2a8fcf" stroke-width="1.1"/><path d="M10.5 12.8v-4.8" stroke="#2a9a35" stroke-width="1.1"/></svg>
<svg class="a" style="left:184px;top:486px" width="5" height="10"><polygon points="4,1 1,5 4,9" fill="#9a9a9a"/></svg>
<svg class="a" style="left:192px;top:891px" width="14" height="12"><path d="M1.5 1.5v9" stroke="#c8c8c8" stroke-width="1.2"/><polygon points="7,1.5 2.8,6 7,10.5" fill="#c8c8c8"/><polygon points="12,1.5 7.8,6 12,10.5" fill="#c8c8c8"/></svg>
<svg class="a" style="left:218px;top:891px" width="8" height="12"><polygon points="6,2 2,6 6,10" fill="#c8c8c8"/></svg>
<div class="a" style="left:239px;top:891px;width:1px;height:14px;background:#dcdcdc"></div>
<div class="a" style="left:319px;top:891px;width:1px;height:14px;background:#dcdcdc"></div>
<div class="a" style="left:375px;top:891px;width:1px;height:14px;background:#dcdcdc"></div>
<svg class="a" style="left:332px;top:891px" width="8" height="12"><polygon points="2,1.5 6.5,6 2,10.5" fill="#222"/></svg>
<svg class="a" style="left:355px;top:891px" width="14" height="12"><polygon points="2,1.5 6.2,6 2,10.5" fill="#c8c8c8"/><polygon points="7,1.5 11.2,6 7,10.5" fill="#c8c8c8"/><path d="M12.5 1.5v9" stroke="#c8c8c8" stroke-width="1.2"/></svg>
<div class="a pg" style="left:245px;top:891px;font-size:11.5px;letter-spacing:0px"><span style="color:#f0a830">1</span> <span style="color:#a9b04a">2</span> <span style="color:#a9b04a">3</span> <span style="color:#a9b04a">4</span> <span style="color:#a9b04a">5</span> <span style="color:#a9b04a">6</span> <span style="color:#a9b04a">7</span> </div>
<div class="a" style="left:380px;top:890px;width:14px;height:14px;border:1px solid #555;border-radius:1px;background:#fff"></div>
<div class="a" style="left:508px;top:890px;width:14px;height:14px;border:1px solid #555;border-radius:1px;background:#fff"></div>
<div class="a pg" style="left:398px;top:890px;color:#555;font-size:11.5px">Resolve hostname</div>
<div class="a pg" style="left:526px;top:890px;color:#555">Highlight Policy Actions</div>
<div class="a pg" style="left:1620px;top:892px">Displaying logs 1 - 100</div>
<div class="a" style="left:1746px;top:890px;width:1px;height:15px;background:#dcdcdc"></div>
<div class="a" style="left:1854px;top:890px;width:1px;height:15px;background:#dcdcdc"></div>
<div class="a" style="left:1750px;top:887px;width:50px;height:20px;border:1px solid #c6c8ca;border-radius:2px;background:#fff"></div>
<div class="a" style="left:1779px;top:888px;width:1px;height:18px;background:#c6c8ca"></div>
<div class="a pg" style="left:1756px;top:890px;color:#3d3d5c;font-size:11px">100</div>
<svg class="a" style="left:1782px;top:894px" width="11" height="7"><polyline points="1,1 5.5,5.5 10,1" fill="none" stroke="#666" stroke-width="1"/></svg>
<div class="a pg" style="left:1803px;top:892px;font-size:11.2px">per page</div>
<div class="a" style="left:1858px;top:887px;width:60px;height:20px;border:1px solid #c6c8ca;border-radius:2px;background:#fff"></div>
<div class="a" style="left:1897px;top:888px;width:1px;height:18px;background:#c6c8ca"></div>
<div class="a pg" style="left:1864px;top:890px;color:#3d3d5c;font-size:11px;letter-spacing:-0.6px">DESC</div>
<svg class="a" style="left:1900px;top:894px" width="11" height="7"><polyline points="1,1 5.5,5.5 10,1" fill="none" stroke="#666" stroke-width="1"/></svg>
<div class="a ft" style="left:13px;color:#9a9ea3">admin</div>
<div class="a ft" style="left:59px">Logout</div>
<div class="a ft" style="left:107px">Last Login Time: 10/07/2020 17:09:41</div>
<div class="a ft" style="left:323px">Session Expire Time: 11/06/2020 16:12:30</div>
<div class="a" style="left:53px;top:917px;width:1px;height:13px;background:#687076"></div>
<div class="a" style="left:101px;top:917px;width:1px;height:13px;background:#687076"></div>
<div class="a" style="left:316px;top:917px;width:1px;height:13px;background:#687076"></div>
<svg class="a" style="left:1691px;top:917px" width="18" height="14"><path d="M1 2.5l1.5 1.5 3-3M1 7l1.5 1.5 3-3M1 11.5l1.5 1.5 3-3" fill="none" stroke="#8a9095" stroke-width="1"/><path d="M7.5 2.5h9.5M7.5 7h9.5M7.5 11.5h9.5" stroke="#8a9095" stroke-width="1.1"/></svg>
<div class="a ft" style="left:1712px;font-size:11px;color:#7d8489">Tasks</div>
<div class="a" style="left:1750px;top:917px;width:1px;height:13px;background:#6a7075"></div>
<div class="a ft" style="left:1758px;font-size:11px;color:#7d8489">Language</div>
<svg class="a" style="left:0;top:0" width="1920" height="937" viewBox="0 0 1920 937"><polygon fill="#f26522" points="1821,924.3 1828.5,916.8 1831,919.3 1823.5,926.8"/><polygon fill="#f26522" points="1826,929 1833.8,917.2 1836.6,919.6 1828.6,931.4"/><polygon fill="#f26522" points="1831,931 1838.5,923.5 1841,926 1833.5,933.5"/></svg>
<div class="a" style="left:1845px;top:915px;font-size:15px;font-weight:bold;color:#fff;line-height:15px;letter-spacing:0.45px">paloalto</div>
<div class="a" style="left:1876px;top:930px;font-size:4px;font-weight:bold;color:#fff;line-height:4px;letter-spacing:0.6px">NETWORKS</div>
</body></html>
